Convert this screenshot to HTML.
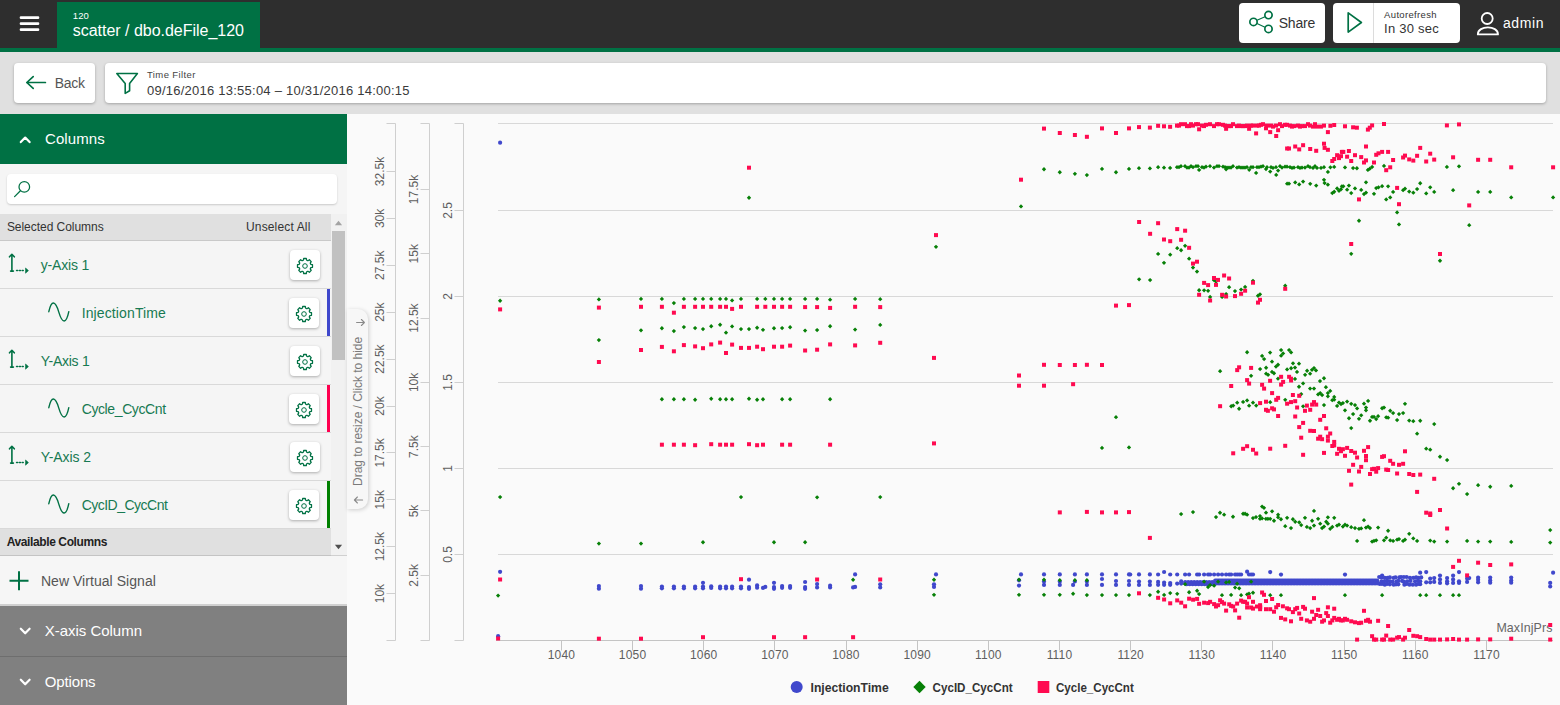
<!DOCTYPE html>
<html lang="en"><head><meta charset="utf-8"><title>scatter / dbo.deFile_120</title>
<style>
*{box-sizing:border-box;margin:0;padding:0}
html,body{width:1560px;height:705px;overflow:hidden;background:#fafafa;font-family:"Liberation Sans",sans-serif;}
.t{position:absolute;line-height:1;white-space:nowrap;}
.abs{position:absolute}
#top{position:absolute;left:0;top:0;width:1560px;height:48px;background:#2e2e2e}
#gline{position:absolute;left:0;top:48px;width:1560px;height:4px;background:#007144}
#tab{position:absolute;left:57px;top:2px;width:203px;height:47px;background:#007144}
#sub{position:absolute;left:0;top:52px;width:1560px;height:62px;background:#e0e0e0}
.btn{position:absolute;background:#fff;border-radius:4px;box-shadow:0 1px 3px rgba(0,0,0,.28)}
#side{position:absolute;left:0;top:114px;width:347px;height:591px;background:#f5f5f5}
.row{position:absolute;left:0;width:331px;height:48px;border-bottom:1px solid #d9d9d9;background:#f5f5f5}
.gear{position:absolute;left:290px;width:30px;height:30px;background:#fff;border-radius:4px;box-shadow:0 1px 3px rgba(0,0,0,.3)}
.bar{position:absolute;left:327px;width:3px;height:47px}
svg{position:absolute;overflow:visible}
</style></head><body>

<div id="top"></div><div id="tab"></div><div id="gline"></div>
<svg style="left:0;top:0" width="60" height="48" viewBox="0 0 60 48"><g fill="#fff"><rect x="19.7" y="16.2" width="19.6" height="2.8" rx="1.2"/><rect x="19.7" y="22.2" width="19.6" height="2.8" rx="1.2"/><rect x="19.7" y="28.2" width="19.6" height="2.8" rx="1.2"/></g></svg>
<div class="t" style="top:11px;font-size:9.5px;color:#fff;letter-spacing:0.183px;left:72.70px;">120</div>
<div class="t" style="top:23px;font-size:16px;color:#fff;letter-spacing:-0.015px;left:72.70px;">scatter / dbo.deFile_120</div>
<div class="btn" style="left:1239px;top:3px;width:86px;height:40px;box-shadow:none"></div>
<svg style="left:1239px;top:3px" width="86" height="40" viewBox="1239 3 86 40"><g fill="none" stroke="#007144" stroke-width="1.7"><circle cx="1268.5" cy="15.1" r="3.65"/><circle cx="1253.5" cy="21.9" r="3.65"/><circle cx="1268.5" cy="28.9" r="3.65"/><path d="M1257 20.3 L1265 16.7 M1257 23.5 L1265 27.3" stroke-width="1.1"/></g></svg>
<div class="t" style="top:16px;font-size:14px;color:#333;letter-spacing:-0.212px;left:1278.70px;">Share</div>
<div class="btn" style="left:1333px;top:3px;width:127px;height:40px;box-shadow:none"></div>
<div class="abs" style="left:1373px;top:3px;width:1px;height:40px;background:#dcdcdc"></div>
<svg style="left:1333px;top:3px" width="40" height="40" viewBox="1333 3 40 40"><path d="M1348.2 12.9 L1361.4 22.5 L1348.2 32.1 Z" fill="none" stroke="#007144" stroke-width="1.7" stroke-linejoin="round"/></svg>
<div class="t" style="top:10px;font-size:9.5px;color:#333;letter-spacing:0.336px;left:1384.10px;">Autorefresh</div>
<div class="t" style="top:22px;font-size:13px;color:#333;letter-spacing:0.250px;left:1384.10px;">In 30 sec</div>
<svg style="left:1470px;top:5px" width="36" height="36" viewBox="1470 5 36 36"><g fill="none" stroke="#fff" stroke-width="1.8"><circle cx="1487.2" cy="18.5" r="5.5"/><path d="M1477.8 34.4 C1477.8 25 1498 25 1498 34.4 Z" stroke-linejoin="round"/></g></svg>
<div class="t" style="top:16px;font-size:14px;color:#fff;letter-spacing:0.574px;left:1503.00px;">admin</div>
<div id="sub"></div>
<div class="btn" style="left:14px;top:63px;width:81px;height:40px"></div>
<svg style="left:14px;top:63px" width="81" height="40" viewBox="14 63 81 40"><path d="M26.8 82.5 H45.4 M33.2 76.6 L26.8 82.5 L33.2 88.4" fill="none" stroke="#007144" stroke-width="1.7" stroke-linecap="round" stroke-linejoin="round"/></svg>
<div class="t" style="top:76px;font-size:14px;color:#555;letter-spacing:-0.256px;left:54.70px;">Back</div>
<div class="btn" style="left:105px;top:63px;width:1441px;height:40px"></div>
<svg style="left:105px;top:63px" width="50" height="40" viewBox="105 63 50 40"><path d="M116.8 73.5 H137.4 L129.6 83.4 V90.8 L125.2 93.4 V83.4 Z" fill="none" stroke="#007144" stroke-width="1.6" stroke-linejoin="round"/></svg>
<div class="t" style="top:70px;font-size:9.5px;color:#444;letter-spacing:0.390px;left:147.00px;">Time Filter</div>
<div class="t" style="top:84px;font-size:13px;color:#3a3a3a;letter-spacing:0.239px;left:147.00px;">09/16/2016 13:55:04 – 10/31/2016 14:00:15</div>
<div id="side"></div>
<div class="abs" style="left:0;top:114px;width:347px;height:50px;background:#007144"></div>
<svg style="left:0;top:114px" width="60" height="50" viewBox="0 114 60 50"><path d="M20.8 142.1 L25.2 137.6 L29.6 142.1" fill="none" stroke="#fff" stroke-width="2.2" stroke-linecap="round" stroke-linejoin="round"/></svg>
<div class="t" style="top:131px;font-size:15px;color:#fff;letter-spacing:0.087px;left:45.00px;">Columns</div>
<div class="btn" style="left:7px;top:174px;width:330px;height:30px;box-shadow:0 1px 2px rgba(0,0,0,.18)"></div>
<svg style="left:7px;top:174px" width="40" height="30" viewBox="7 174 40 30"><g fill="none" stroke="#007144" stroke-width="1.25" stroke-linecap="round"><circle cx="24.3" cy="186.9" r="5.3"/><path d="M20.4 190.7 L14.6 196.6"/></g></svg>
<div class="abs" style="left:0;top:214px;width:331px;height:27px;background:#e0e0e0;border-bottom:1px solid #c9c9c9"></div>
<div class="t" style="top:221px;font-size:12px;color:#333;letter-spacing:-0.037px;left:6.90px;">Selected Columns</div>
<div class="t" style="top:221px;font-size:12px;color:#333;letter-spacing:0.150px;left:246.00px;">Unselect All</div>
<div class="abs" style="left:331px;top:214px;width:16px;height:342px;background:#f1f1f1"></div>
<div class="abs" style="left:332px;top:231px;width:13px;height:129px;background:#c1c1c1"></div>
<svg style="left:331px;top:214px" width="16" height="342" viewBox="331 214 16 342"><path d="M334.9 225.2 L338.5 220.8 L342.1 225.2 Z" fill="#a3a3a3"/><path d="M334.9 544.8 L338.5 549.2 L342.1 544.8 Z" fill="#505050"/></svg>
<div class="row" style="top:241px"></div>
<div class="gear" style="top:250px;left:290px"></div>
<div class="t" style="top:258px;font-size:14px;color:#177a52;letter-spacing:-0.161px;left:40.70px;">y-Axis 1</div>
<div class="row" style="top:289px"></div>
<div class="gear" style="top:298px;left:289px"></div>
<div class="t" style="top:306px;font-size:14px;color:#177a52;letter-spacing:0.120px;left:81.70px;">InjectionTime</div>
<div class="bar" style="top:289px;background:#3f48cc"></div>
<div class="row" style="top:337px"></div>
<div class="gear" style="top:346px;left:290px"></div>
<div class="t" style="top:354px;font-size:14px;color:#177a52;letter-spacing:-0.255px;left:40.70px;">Y-Axis 1</div>
<div class="row" style="top:385px"></div>
<div class="gear" style="top:394px;left:289px"></div>
<div class="t" style="top:402px;font-size:14px;color:#177a52;letter-spacing:-0.391px;left:81.70px;">Cycle_CycCnt</div>
<div class="bar" style="top:385px;background:#ff0050"></div>
<div class="row" style="top:433px"></div>
<div class="gear" style="top:442px;left:290px"></div>
<div class="t" style="top:450px;font-size:14px;color:#177a52;letter-spacing:-0.067px;left:40.70px;">Y-Axis 2</div>
<div class="row" style="top:481px"></div>
<div class="gear" style="top:490px;left:289px"></div>
<div class="t" style="top:498px;font-size:14px;color:#177a52;letter-spacing:-0.516px;left:81.70px;">CycID_CycCnt</div>
<div class="bar" style="top:481px;background:#008000"></div>
<svg style="left:0;top:0" width="347" height="705" viewBox="0 0 347 705"><path d="M310.77 264.34 L312.49 264.71 L312.49 267.29 L310.77 267.66 L310.25 268.90 L311.21 270.39 L309.39 272.21 L307.90 271.25 L306.66 271.77 L306.29 273.49 L303.71 273.49 L303.34 271.77 L302.10 271.25 L300.61 272.21 L298.79 270.39 L299.75 268.90 L299.23 267.66 L297.51 267.29 L297.51 264.71 L299.23 264.34 L299.75 263.10 L298.79 261.61 L300.61 259.79 L302.10 260.75 L303.34 260.23 L303.71 258.51 L306.29 258.51 L306.66 260.23 L307.90 260.75 L309.39 259.79 L311.21 261.61 L310.25 263.10 Z" fill="none" stroke="#007144" stroke-width="1.3" stroke-linejoin="round"/><circle cx="305" cy="266" r="2.3" fill="none" stroke="#007144" stroke-width="1"/><g fill="none" stroke="#007144" stroke-width="1.6" stroke-linecap="round" stroke-linejoin="round"><path d="M11.9 271.1 V254.7 M9.5 256.8 L11.9 254.3 L14.3 256.8"/><path d="M10.6 271.1 H13.4"/><path d="M16.6 270.5 H17.6 M19.4 270.5 H20.4 M22.2 270.5 H23.2" /><path d="M25.8 268.3 L28.4 270.6 L25.8 272.9 Z" fill="#007144" stroke-width="0.7"/></g><path d="M309.77 312.34 L311.49 312.71 L311.49 315.29 L309.77 315.66 L309.25 316.90 L310.21 318.39 L308.39 320.21 L306.90 319.25 L305.66 319.77 L305.29 321.49 L302.71 321.49 L302.34 319.77 L301.10 319.25 L299.61 320.21 L297.79 318.39 L298.75 316.90 L298.23 315.66 L296.51 315.29 L296.51 312.71 L298.23 312.34 L298.75 311.10 L297.79 309.61 L299.61 307.79 L301.10 308.75 L302.34 308.23 L302.71 306.51 L305.29 306.51 L305.66 308.23 L306.90 308.75 L308.39 307.79 L310.21 309.61 L309.25 311.10 Z" fill="none" stroke="#007144" stroke-width="1.3" stroke-linejoin="round"/><circle cx="304" cy="314" r="2.3" fill="none" stroke="#007144" stroke-width="1"/><path d="M48.8 311.7 C51.4 300.1 55.2 300.1 58.8 312.1 C62.4 324.1 66.2 324.1 68.8 311.7" fill="none" stroke="#007144" stroke-width="1.4" stroke-linecap="round"/><path d="M310.77 360.34 L312.49 360.71 L312.49 363.29 L310.77 363.66 L310.25 364.90 L311.21 366.39 L309.39 368.21 L307.90 367.25 L306.66 367.77 L306.29 369.49 L303.71 369.49 L303.34 367.77 L302.10 367.25 L300.61 368.21 L298.79 366.39 L299.75 364.90 L299.23 363.66 L297.51 363.29 L297.51 360.71 L299.23 360.34 L299.75 359.10 L298.79 357.61 L300.61 355.79 L302.10 356.75 L303.34 356.23 L303.71 354.51 L306.29 354.51 L306.66 356.23 L307.90 356.75 L309.39 355.79 L311.21 357.61 L310.25 359.10 Z" fill="none" stroke="#007144" stroke-width="1.3" stroke-linejoin="round"/><circle cx="305" cy="362" r="2.3" fill="none" stroke="#007144" stroke-width="1"/><g fill="none" stroke="#007144" stroke-width="1.6" stroke-linecap="round" stroke-linejoin="round"><path d="M11.9 367.1 V350.7 M9.5 352.8 L11.9 350.3 L14.3 352.8"/><path d="M10.6 367.1 H13.4"/><path d="M16.6 366.5 H17.6 M19.4 366.5 H20.4 M22.2 366.5 H23.2" /><path d="M25.8 364.3 L28.4 366.6 L25.8 368.9 Z" fill="#007144" stroke-width="0.7"/></g><path d="M309.77 408.34 L311.49 408.71 L311.49 411.29 L309.77 411.66 L309.25 412.90 L310.21 414.39 L308.39 416.21 L306.90 415.25 L305.66 415.77 L305.29 417.49 L302.71 417.49 L302.34 415.77 L301.10 415.25 L299.61 416.21 L297.79 414.39 L298.75 412.90 L298.23 411.66 L296.51 411.29 L296.51 408.71 L298.23 408.34 L298.75 407.10 L297.79 405.61 L299.61 403.79 L301.10 404.75 L302.34 404.23 L302.71 402.51 L305.29 402.51 L305.66 404.23 L306.90 404.75 L308.39 403.79 L310.21 405.61 L309.25 407.10 Z" fill="none" stroke="#007144" stroke-width="1.3" stroke-linejoin="round"/><circle cx="304" cy="410" r="2.3" fill="none" stroke="#007144" stroke-width="1"/><path d="M48.8 407.7 C51.4 396.1 55.2 396.1 58.8 408.1 C62.4 420.1 66.2 420.1 68.8 407.7" fill="none" stroke="#007144" stroke-width="1.4" stroke-linecap="round"/><path d="M310.77 456.34 L312.49 456.71 L312.49 459.29 L310.77 459.66 L310.25 460.90 L311.21 462.39 L309.39 464.21 L307.90 463.25 L306.66 463.77 L306.29 465.49 L303.71 465.49 L303.34 463.77 L302.10 463.25 L300.61 464.21 L298.79 462.39 L299.75 460.90 L299.23 459.66 L297.51 459.29 L297.51 456.71 L299.23 456.34 L299.75 455.10 L298.79 453.61 L300.61 451.79 L302.10 452.75 L303.34 452.23 L303.71 450.51 L306.29 450.51 L306.66 452.23 L307.90 452.75 L309.39 451.79 L311.21 453.61 L310.25 455.10 Z" fill="none" stroke="#007144" stroke-width="1.3" stroke-linejoin="round"/><circle cx="305" cy="458" r="2.3" fill="none" stroke="#007144" stroke-width="1"/><g fill="none" stroke="#007144" stroke-width="1.6" stroke-linecap="round" stroke-linejoin="round"><path d="M11.9 463.1 V446.7 M9.5 448.8 L11.9 446.3 L14.3 448.8"/><path d="M10.6 463.1 H13.4"/><path d="M16.6 462.5 H17.6 M19.4 462.5 H20.4 M22.2 462.5 H23.2" /><path d="M25.8 460.3 L28.4 462.6 L25.8 464.9 Z" fill="#007144" stroke-width="0.7"/></g><path d="M309.77 504.34 L311.49 504.71 L311.49 507.29 L309.77 507.66 L309.25 508.90 L310.21 510.39 L308.39 512.21 L306.90 511.25 L305.66 511.77 L305.29 513.49 L302.71 513.49 L302.34 511.77 L301.10 511.25 L299.61 512.21 L297.79 510.39 L298.75 508.90 L298.23 507.66 L296.51 507.29 L296.51 504.71 L298.23 504.34 L298.75 503.10 L297.79 501.61 L299.61 499.79 L301.10 500.75 L302.34 500.23 L302.71 498.51 L305.29 498.51 L305.66 500.23 L306.90 500.75 L308.39 499.79 L310.21 501.61 L309.25 503.10 Z" fill="none" stroke="#007144" stroke-width="1.3" stroke-linejoin="round"/><circle cx="304" cy="506" r="2.3" fill="none" stroke="#007144" stroke-width="1"/><path d="M48.8 503.7 C51.4 492.1 55.2 492.1 58.8 504.1 C62.4 516.1 66.2 516.1 68.8 503.7" fill="none" stroke="#007144" stroke-width="1.4" stroke-linecap="round"/></svg>
<div class="abs" style="left:0;top:529px;width:331px;height:27px;background:#e0e0e0;border-bottom:1px solid #c4c4c4"></div>
<div class="t" style="top:536px;font-size:12px;color:#222;letter-spacing:-0.390px;left:6.70px;font-weight:bold;">Available Columns</div>
<div class="abs" style="left:0;top:556px;width:347px;height:49px;background:#f6f6f6"></div>
<div class="abs" style="left:331px;top:555px;width:16px;height:1px;background:#d0d0d0"></div>
<svg style="left:0;top:556px" width="40" height="49" viewBox="0 556 40 49"><path d="M19 571.3 V590.3 M9.5 580.8 H28.5" stroke="#007144" stroke-width="2" fill="none"/></svg>
<div class="t" style="top:574px;font-size:14px;color:#555;letter-spacing:0.048px;left:40.90px;">New Virtual Signal</div>
<div class="abs" style="left:0;top:604px;width:347px;height:2px;background:#d0d0d0"></div>
<div class="abs" style="left:0;top:606px;width:347px;height:99px;background:#808080"></div>
<div class="abs" style="left:0;top:656px;width:347px;height:1px;background:#6e6e6e"></div>
<svg style="left:0;top:606px" width="60" height="99" viewBox="0 606 60 99"><g fill="none" stroke="#fff" stroke-width="2.2" stroke-linecap="round" stroke-linejoin="round"><path d="M20.8 628.7 L25.2 633.3 L29.6 628.7"/><path d="M20.8 679.7 L25.2 684.3 L29.6 679.7"/></g></svg>
<div class="t" style="top:623px;font-size:15px;color:#fff;letter-spacing:-0.018px;left:44.70px;">X-axis Column</div>
<div class="t" style="top:674px;font-size:15px;color:#fff;letter-spacing:-0.128px;left:44.70px;">Options</div>
<div class="abs" style="left:347px;top:309px;width:21px;height:200px;background:#f7f7f7;border-radius:0 10px 10px 0;box-shadow:1px 1px 4px rgba(0,0,0,.18)"></div>
<svg style="left:0;top:0;font-family:'Liberation Sans',sans-serif" width="1560" height="705" viewBox="0 0 1560 705"><path d="M498 123.5 H1553" stroke="#d8d8d8" stroke-width="1"/><path d="M498 210.5 H1553" stroke="#d8d8d8" stroke-width="1"/><path d="M498 296.5 H1553" stroke="#d8d8d8" stroke-width="1"/><path d="M498 382.5 H1553" stroke="#d8d8d8" stroke-width="1"/><path d="M498 468.5 H1553" stroke="#d8d8d8" stroke-width="1"/><path d="M498 554.5 H1553" stroke="#d8d8d8" stroke-width="1"/><path d="M496 640.5 H1553" stroke="#c4c4c4" stroke-width="1"/><path d="M386.5 123.5 H395.5 V640.5 H386.5" fill="none" stroke="#cfcfcf" stroke-width="1"/><path d="M420.5 123.5 H429.5 V640.5 H420.5" fill="none" stroke="#cfcfcf" stroke-width="1"/><path d="M454.5 123.5 H463.5 V640.5 H454.5" fill="none" stroke="#cfcfcf" stroke-width="1"/><path d="M386.5 171.5 H395.5" stroke="#cfcfcf" stroke-width="1"/><text transform="translate(383.8 171.5) rotate(-90)" text-anchor="middle" font-size="12" fill="#5e5e5e">32.5k</text><path d="M386.5 218.5 H395.5" stroke="#cfcfcf" stroke-width="1"/><text transform="translate(383.8 218.4) rotate(-90)" text-anchor="middle" font-size="12" fill="#5e5e5e">30k</text><path d="M386.5 265.5 H395.5" stroke="#cfcfcf" stroke-width="1"/><text transform="translate(383.8 265.3) rotate(-90)" text-anchor="middle" font-size="12" fill="#5e5e5e">27.5k</text><path d="M386.5 312.5 H395.5" stroke="#cfcfcf" stroke-width="1"/><text transform="translate(383.8 312.2) rotate(-90)" text-anchor="middle" font-size="12" fill="#5e5e5e">25k</text><path d="M386.5 359.5 H395.5" stroke="#cfcfcf" stroke-width="1"/><text transform="translate(383.8 359.1) rotate(-90)" text-anchor="middle" font-size="12" fill="#5e5e5e">22.5k</text><path d="M386.5 406.5 H395.5" stroke="#cfcfcf" stroke-width="1"/><text transform="translate(383.8 406.0) rotate(-90)" text-anchor="middle" font-size="12" fill="#5e5e5e">20k</text><path d="M386.5 452.5 H395.5" stroke="#cfcfcf" stroke-width="1"/><text transform="translate(383.8 452.9) rotate(-90)" text-anchor="middle" font-size="12" fill="#5e5e5e">17.5k</text><path d="M386.5 499.5 H395.5" stroke="#cfcfcf" stroke-width="1"/><text transform="translate(383.8 499.8) rotate(-90)" text-anchor="middle" font-size="12" fill="#5e5e5e">15k</text><path d="M386.5 546.5 H395.5" stroke="#cfcfcf" stroke-width="1"/><text transform="translate(383.8 546.7) rotate(-90)" text-anchor="middle" font-size="12" fill="#5e5e5e">12.5k</text><path d="M386.5 593.5 H395.5" stroke="#cfcfcf" stroke-width="1"/><text transform="translate(383.8 593.5999999999999) rotate(-90)" text-anchor="middle" font-size="12" fill="#5e5e5e">10k</text><path d="M420.5 189.5 H429.5" stroke="#cfcfcf" stroke-width="1"/><text transform="translate(417.6 189.5) rotate(-90)" text-anchor="middle" font-size="12" fill="#5e5e5e">17.5k</text><path d="M420.5 253.5 H429.5" stroke="#cfcfcf" stroke-width="1"/><text transform="translate(417.6 253.8) rotate(-90)" text-anchor="middle" font-size="12" fill="#5e5e5e">15k</text><path d="M420.5 318.5 H429.5" stroke="#cfcfcf" stroke-width="1"/><text transform="translate(417.6 318.1) rotate(-90)" text-anchor="middle" font-size="12" fill="#5e5e5e">12.5k</text><path d="M420.5 382.5 H429.5" stroke="#cfcfcf" stroke-width="1"/><text transform="translate(417.6 382.4) rotate(-90)" text-anchor="middle" font-size="12" fill="#5e5e5e">10k</text><path d="M420.5 446.5 H429.5" stroke="#cfcfcf" stroke-width="1"/><text transform="translate(417.6 446.7) rotate(-90)" text-anchor="middle" font-size="12" fill="#5e5e5e">7.5k</text><path d="M420.5 510.5 H429.5" stroke="#cfcfcf" stroke-width="1"/><text transform="translate(417.6 511.0) rotate(-90)" text-anchor="middle" font-size="12" fill="#5e5e5e">5k</text><path d="M420.5 575.5 H429.5" stroke="#cfcfcf" stroke-width="1"/><text transform="translate(417.6 575.3) rotate(-90)" text-anchor="middle" font-size="12" fill="#5e5e5e">2.5k</text><path d="M454.5 210.5 H463.5" stroke="#cfcfcf" stroke-width="1"/><text transform="translate(451.8 210.5) rotate(-90)" text-anchor="middle" font-size="12" fill="#5e5e5e">2.5</text><path d="M454.5 296.5 H463.5" stroke="#cfcfcf" stroke-width="1"/><text transform="translate(451.8 296.5) rotate(-90)" text-anchor="middle" font-size="12" fill="#5e5e5e">2</text><path d="M454.5 382.5 H463.5" stroke="#cfcfcf" stroke-width="1"/><text transform="translate(451.8 382.5) rotate(-90)" text-anchor="middle" font-size="12" fill="#5e5e5e">1.5</text><path d="M454.5 468.5 H463.5" stroke="#cfcfcf" stroke-width="1"/><text transform="translate(451.8 468.5) rotate(-90)" text-anchor="middle" font-size="12" fill="#5e5e5e">1</text><path d="M454.5 554.5 H463.5" stroke="#cfcfcf" stroke-width="1"/><text transform="translate(451.8 554.5) rotate(-90)" text-anchor="middle" font-size="12" fill="#5e5e5e">0.5</text><path d="M561.5 640.5 V650.5" stroke="#c4c4c4" stroke-width="1"/><text x="561.4" y="658.8" text-anchor="middle" font-size="12" letter-spacing="0.2" fill="#5e5e5e">1040</text><path d="M632.5 640.5 V650.5" stroke="#c4c4c4" stroke-width="1"/><text x="632.6" y="658.8" text-anchor="middle" font-size="12" letter-spacing="0.2" fill="#5e5e5e">1050</text><path d="M703.5 640.5 V650.5" stroke="#c4c4c4" stroke-width="1"/><text x="703.7" y="658.8" text-anchor="middle" font-size="12" letter-spacing="0.2" fill="#5e5e5e">1060</text><path d="M774.5 640.5 V650.5" stroke="#c4c4c4" stroke-width="1"/><text x="774.9" y="658.8" text-anchor="middle" font-size="12" letter-spacing="0.2" fill="#5e5e5e">1070</text><path d="M846.5 640.5 V650.5" stroke="#c4c4c4" stroke-width="1"/><text x="846.0" y="658.8" text-anchor="middle" font-size="12" letter-spacing="0.2" fill="#5e5e5e">1080</text><path d="M917.5 640.5 V650.5" stroke="#c4c4c4" stroke-width="1"/><text x="917.2" y="658.8" text-anchor="middle" font-size="12" letter-spacing="0.2" fill="#5e5e5e">1090</text><path d="M988.5 640.5 V650.5" stroke="#c4c4c4" stroke-width="1"/><text x="988.4" y="658.8" text-anchor="middle" font-size="12" letter-spacing="0.2" fill="#5e5e5e">1100</text><path d="M1059.5 640.5 V650.5" stroke="#c4c4c4" stroke-width="1"/><text x="1059.5" y="658.8" text-anchor="middle" font-size="12" letter-spacing="0.2" fill="#5e5e5e">1110</text><path d="M1130.5 640.5 V650.5" stroke="#c4c4c4" stroke-width="1"/><text x="1130.7" y="658.8" text-anchor="middle" font-size="12" letter-spacing="0.2" fill="#5e5e5e">1120</text><path d="M1201.5 640.5 V650.5" stroke="#c4c4c4" stroke-width="1"/><text x="1201.8" y="658.8" text-anchor="middle" font-size="12" letter-spacing="0.2" fill="#5e5e5e">1130</text><path d="M1272.5 640.5 V650.5" stroke="#c4c4c4" stroke-width="1"/><text x="1273.0" y="658.8" text-anchor="middle" font-size="12" letter-spacing="0.2" fill="#5e5e5e">1140</text><path d="M1344.5 640.5 V650.5" stroke="#c4c4c4" stroke-width="1"/><text x="1344.2" y="658.8" text-anchor="middle" font-size="12" letter-spacing="0.2" fill="#5e5e5e">1150</text><path d="M1415.5 640.5 V650.5" stroke="#c4c4c4" stroke-width="1"/><text x="1415.3" y="658.8" text-anchor="middle" font-size="12" letter-spacing="0.2" fill="#5e5e5e">1160</text><path d="M1486.5 640.5 V650.5" stroke="#c4c4c4" stroke-width="1"/><text x="1486.5" y="658.8" text-anchor="middle" font-size="12" letter-spacing="0.2" fill="#5e5e5e">1170</text><text x="1496.4" y="631.8" font-size="12.4" fill="#666" textLength="56" lengthAdjust="spacing">MaxInjPrs</text><g fill="#4048cc"><circle cx="500.1" cy="142.7" r="2.1"/><circle cx="500.1" cy="571.8" r="2.1"/><circle cx="498.1" cy="636.2" r="2.1"/><circle cx="598.9" cy="586.1" r="2.1"/><circle cx="598.9" cy="588.7" r="2.1"/><circle cx="641.0" cy="586.1" r="2.1"/><circle cx="641.0" cy="588.7" r="2.1"/><circle cx="703.0" cy="582.8" r="2.1"/><circle cx="749.0" cy="579.7" r="2.1"/><circle cx="757.1" cy="585.4" r="2.1"/><circle cx="757.1" cy="587.7" r="2.1"/><circle cx="763.0" cy="587.9" r="2.1"/><circle cx="765.3" cy="586.9" r="2.1"/><circle cx="774.0" cy="582.8" r="2.1"/><circle cx="805.1" cy="582.0" r="2.1"/><circle cx="817.1" cy="584.1" r="2.1"/><circle cx="817.1" cy="587.4" r="2.1"/><circle cx="853.1" cy="587.4" r="2.1"/><circle cx="855.1" cy="574.4" r="2.1"/><circle cx="855.1" cy="586.9" r="2.1"/><circle cx="661.9" cy="586.5" r="2.1"/><circle cx="661.9" cy="588.3" r="2.1"/><circle cx="673.9" cy="586.5" r="2.1"/><circle cx="673.9" cy="588.3" r="2.1"/><circle cx="683.9" cy="586.5" r="2.1"/><circle cx="683.9" cy="588.3" r="2.1"/><circle cx="695.1" cy="586.5" r="2.1"/><circle cx="695.1" cy="588.3" r="2.1"/><circle cx="703.0" cy="586.5" r="2.1"/><circle cx="703.0" cy="588.3" r="2.1"/><circle cx="711.2" cy="586.3" r="2.1"/><circle cx="711.2" cy="588.0" r="2.1"/><circle cx="720.1" cy="586.5" r="2.1"/><circle cx="720.1" cy="588.3" r="2.1"/><circle cx="726.0" cy="586.5" r="2.1"/><circle cx="726.0" cy="588.3" r="2.1"/><circle cx="732.1" cy="586.5" r="2.1"/><circle cx="732.1" cy="588.3" r="2.1"/><circle cx="741.0" cy="586.5" r="2.1"/><circle cx="741.0" cy="588.3" r="2.1"/><circle cx="749.0" cy="587.0" r="2.1"/><circle cx="749.0" cy="588.8" r="2.1"/><circle cx="774.0" cy="587.0" r="2.1"/><circle cx="774.0" cy="588.8" r="2.1"/><circle cx="782.1" cy="586.0" r="2.1"/><circle cx="782.1" cy="587.8" r="2.1"/><circle cx="790.1" cy="586.0" r="2.1"/><circle cx="790.1" cy="587.8" r="2.1"/><circle cx="805.1" cy="587.0" r="2.1"/><circle cx="805.1" cy="588.8" r="2.1"/><circle cx="830.1" cy="585.7" r="2.1"/><circle cx="830.1" cy="587.5" r="2.1"/><circle cx="880.2" cy="584.3" r="2.1"/><circle cx="880.2" cy="587.4" r="2.1"/><circle cx="936.0" cy="574.4" r="2.1"/><circle cx="934.0" cy="584.3" r="2.1"/><circle cx="934.0" cy="586.9" r="2.1"/><circle cx="1021.0" cy="574.4" r="2.1"/><circle cx="1019.0" cy="580.3" r="2.1"/><circle cx="1019.0" cy="585.6" r="2.1"/><circle cx="1044.0" cy="574.4" r="2.1"/><circle cx="1044.0" cy="581.5" r="2.1"/><circle cx="1044.0" cy="584.9" r="2.1"/><circle cx="1059.8" cy="574.4" r="2.1"/><circle cx="1059.8" cy="581.5" r="2.1"/><circle cx="1059.8" cy="584.9" r="2.1"/><circle cx="1074.9" cy="574.4" r="2.1"/><circle cx="1074.9" cy="581.5" r="2.1"/><circle cx="1073.1" cy="584.9" r="2.1"/><circle cx="1086.9" cy="574.4" r="2.1"/><circle cx="1086.9" cy="581.5" r="2.1"/><circle cx="1086.9" cy="584.9" r="2.1"/><circle cx="1102.0" cy="574.4" r="2.1"/><circle cx="1102.0" cy="579.0" r="2.1"/><circle cx="1102.0" cy="584.9" r="2.1"/><circle cx="1116.0" cy="574.4" r="2.1"/><circle cx="1116.0" cy="581.0" r="2.1"/><circle cx="1116.0" cy="584.9" r="2.1"/><circle cx="1129.0" cy="574.4" r="2.1"/><circle cx="1129.0" cy="581.0" r="2.1"/><circle cx="1129.0" cy="584.9" r="2.1"/><circle cx="1139.0" cy="574.4" r="2.1"/><circle cx="1139.0" cy="581.5" r="2.1"/><circle cx="1139.0" cy="584.9" r="2.1"/><circle cx="1149.9" cy="574.4" r="2.1"/><circle cx="1149.9" cy="581.5" r="2.1"/><circle cx="1149.9" cy="584.9" r="2.1"/><circle cx="1270.2" cy="572.1" r="2.1"/><circle cx="1281.0" cy="574.6" r="2.1"/><circle cx="1345.0" cy="574.6" r="2.1"/><circle cx="1382.1" cy="575.6" r="2.1"/><circle cx="1420.2" cy="572.7" r="2.1"/><circle cx="1420.2" cy="581.3" r="2.1"/><circle cx="1420.2" cy="584.2" r="2.1"/><circle cx="1426.2" cy="572.1" r="2.1"/><circle cx="1426.2" cy="582.3" r="2.1"/><circle cx="1430.2" cy="578.5" r="2.1"/><circle cx="1430.2" cy="582.3" r="2.1"/><circle cx="1434.2" cy="578.1" r="2.1"/><circle cx="1434.2" cy="581.9" r="2.1"/><circle cx="1440.0" cy="575.6" r="2.1"/><circle cx="1440.0" cy="579.4" r="2.1"/><circle cx="1440.0" cy="582.9" r="2.1"/><circle cx="1447.1" cy="578.1" r="2.1"/><circle cx="1447.1" cy="581.3" r="2.1"/><circle cx="1447.1" cy="583.3" r="2.1"/><circle cx="1453.1" cy="575.6" r="2.1"/><circle cx="1453.1" cy="579.4" r="2.1"/><circle cx="1453.1" cy="582.9" r="2.1"/><circle cx="1459.0" cy="572.1" r="2.1"/><circle cx="1459.0" cy="581.3" r="2.1"/><circle cx="1459.0" cy="582.9" r="2.1"/><circle cx="1467.1" cy="578.5" r="2.1"/><circle cx="1467.1" cy="581.9" r="2.1"/><circle cx="1469.2" cy="578.1" r="2.1"/><circle cx="1478.1" cy="577.5" r="2.1"/><circle cx="1478.1" cy="579.8" r="2.1"/><circle cx="1478.1" cy="582.3" r="2.1"/><circle cx="1490.2" cy="577.5" r="2.1"/><circle cx="1490.2" cy="580.4" r="2.1"/><circle cx="1490.2" cy="582.7" r="2.1"/><circle cx="1511.2" cy="577.5" r="2.1"/><circle cx="1511.2" cy="580.4" r="2.1"/><circle cx="1511.2" cy="582.7" r="2.1"/><circle cx="1550.2" cy="582.9" r="2.1"/><circle cx="1550.2" cy="586.5" r="2.1"/><circle cx="1553.1" cy="572.7" r="2.1"/><circle cx="1130.2" cy="574.5" r="2.1"/><circle cx="1158.1" cy="574.5" r="2.1"/><circle cx="1170.2" cy="574.5" r="2.1"/><circle cx="1177.2" cy="574.5" r="2.1"/><circle cx="1185.1" cy="574.5" r="2.1"/><circle cx="1189.1" cy="574.5" r="2.1"/><circle cx="1197.1" cy="574.5" r="2.1"/><circle cx="1199.1" cy="574.5" r="2.1"/><circle cx="1204.1" cy="574.5" r="2.1"/><circle cx="1208.1" cy="574.5" r="2.1"/><circle cx="1210.1" cy="574.5" r="2.1"/><circle cx="1214.1" cy="574.5" r="2.1"/><circle cx="1218.1" cy="574.5" r="2.1"/><circle cx="1222.0" cy="574.5" r="2.1"/><circle cx="1226.1" cy="574.5" r="2.1"/><circle cx="1229.2" cy="574.5" r="2.1"/><circle cx="1231.1" cy="574.5" r="2.1"/><circle cx="1235.1" cy="574.5" r="2.1"/><circle cx="1237.1" cy="574.5" r="2.1"/><circle cx="1239.2" cy="574.5" r="2.1"/><circle cx="1241.1" cy="574.5" r="2.1"/><circle cx="1249.0" cy="574.5" r="2.1"/><circle cx="1251.1" cy="574.5" r="2.1"/><circle cx="1253.0" cy="574.5" r="2.1"/><circle cx="1164.1" cy="572.0" r="2.1"/><circle cx="1247.1" cy="571.7" r="2.1"/><circle cx="1158.1" cy="581.9" r="2.1"/><circle cx="1158.1" cy="584.8" r="2.1"/><circle cx="1164.1" cy="582.5" r="2.1"/><circle cx="1164.1" cy="584.8" r="2.1"/><circle cx="1170.2" cy="583.1" r="2.1"/><circle cx="1170.2" cy="584.8" r="2.1"/><circle cx="1177.2" cy="583.6" r="2.1"/><circle cx="1181.2" cy="581.4" r="2.1"/><circle cx="1181.2" cy="583.6" r="2.1"/><circle cx="1185.2" cy="583.3" r="2.1"/><circle cx="1186.7" cy="583.3" r="2.1"/><circle cx="1188.2" cy="583.3" r="2.1"/><circle cx="1189.7" cy="583.3" r="2.1"/><circle cx="1191.2" cy="583.3" r="2.1"/><circle cx="1192.7" cy="583.3" r="2.1"/><circle cx="1194.2" cy="583.3" r="2.1"/><circle cx="1195.7" cy="583.3" r="2.1"/><circle cx="1197.2" cy="583.3" r="2.1"/><circle cx="1198.7" cy="583.3" r="2.1"/><circle cx="1200.2" cy="583.3" r="2.1"/><circle cx="1201.7" cy="583.3" r="2.1"/><circle cx="1203.2" cy="583.3" r="2.1"/><circle cx="1204.7" cy="583.3" r="2.1"/><circle cx="1206.2" cy="583.3" r="2.1"/><circle cx="1207.7" cy="583.3" r="2.1"/><circle cx="1209.2" cy="583.3" r="2.1"/><circle cx="1210.7" cy="583.3" r="2.1"/><circle cx="1212.2" cy="583.3" r="2.1"/><circle cx="1213.7" cy="583.3" r="2.1"/><circle cx="1215.2" cy="580.7" r="2.1"/><circle cx="1215.2" cy="583.3" r="2.1"/><circle cx="1216.7" cy="580.7" r="2.1"/><circle cx="1216.7" cy="583.3" r="2.1"/><circle cx="1218.2" cy="580.7" r="2.1"/><circle cx="1218.2" cy="583.3" r="2.1"/><circle cx="1219.7" cy="580.7" r="2.1"/><circle cx="1219.7" cy="583.3" r="2.1"/><circle cx="1221.2" cy="580.7" r="2.1"/><circle cx="1221.2" cy="583.3" r="2.1"/><circle cx="1222.7" cy="580.7" r="2.1"/><circle cx="1222.7" cy="583.3" r="2.1"/><circle cx="1224.2" cy="580.7" r="2.1"/><circle cx="1224.2" cy="583.3" r="2.1"/><circle cx="1225.7" cy="580.7" r="2.1"/><circle cx="1225.7" cy="583.3" r="2.1"/><circle cx="1227.2" cy="580.7" r="2.1"/><circle cx="1227.2" cy="583.3" r="2.1"/><circle cx="1228.7" cy="580.7" r="2.1"/><circle cx="1228.7" cy="583.3" r="2.1"/><circle cx="1230.2" cy="580.7" r="2.1"/><circle cx="1230.2" cy="583.3" r="2.1"/><circle cx="1231.7" cy="580.7" r="2.1"/><circle cx="1231.7" cy="583.3" r="2.1"/><circle cx="1233.2" cy="580.7" r="2.1"/><circle cx="1233.2" cy="583.3" r="2.1"/><circle cx="1234.7" cy="580.7" r="2.1"/><circle cx="1234.7" cy="583.3" r="2.1"/><circle cx="1236.2" cy="580.7" r="2.1"/><circle cx="1236.2" cy="583.3" r="2.1"/><circle cx="1237.7" cy="580.7" r="2.1"/><circle cx="1237.7" cy="583.3" r="2.1"/><circle cx="1239.2" cy="580.7" r="2.1"/><circle cx="1239.2" cy="583.3" r="2.1"/><circle cx="1240.7" cy="580.7" r="2.1"/><circle cx="1240.7" cy="583.3" r="2.1"/><circle cx="1242.2" cy="580.7" r="2.1"/><circle cx="1242.2" cy="583.3" r="2.1"/><circle cx="1243.7" cy="580.7" r="2.1"/><circle cx="1243.7" cy="583.3" r="2.1"/><circle cx="1245.2" cy="580.7" r="2.1"/><circle cx="1245.2" cy="583.3" r="2.1"/><circle cx="1246.7" cy="580.7" r="2.1"/><circle cx="1246.7" cy="583.3" r="2.1"/><circle cx="1248.2" cy="580.7" r="2.1"/><circle cx="1248.2" cy="583.3" r="2.1"/><circle cx="1249.7" cy="580.7" r="2.1"/><circle cx="1249.7" cy="583.3" r="2.1"/><circle cx="1251.2" cy="580.7" r="2.1"/><circle cx="1251.2" cy="583.3" r="2.1"/><circle cx="1252.7" cy="580.7" r="2.1"/><circle cx="1252.7" cy="583.3" r="2.1"/><circle cx="1254.2" cy="580.7" r="2.1"/><circle cx="1254.2" cy="583.3" r="2.1"/><circle cx="1255.7" cy="580.7" r="2.1"/><circle cx="1255.7" cy="583.3" r="2.1"/><circle cx="1257.2" cy="580.7" r="2.1"/><circle cx="1257.2" cy="583.3" r="2.1"/><circle cx="1258.7" cy="580.7" r="2.1"/><circle cx="1258.7" cy="583.3" r="2.1"/><circle cx="1260.2" cy="580.7" r="2.1"/><circle cx="1260.2" cy="583.3" r="2.1"/><circle cx="1261.7" cy="580.7" r="2.1"/><circle cx="1261.7" cy="583.3" r="2.1"/><circle cx="1263.2" cy="580.7" r="2.1"/><circle cx="1263.2" cy="583.3" r="2.1"/><circle cx="1264.7" cy="580.7" r="2.1"/><circle cx="1264.7" cy="583.3" r="2.1"/><circle cx="1266.2" cy="580.7" r="2.1"/><circle cx="1266.2" cy="583.3" r="2.1"/><circle cx="1267.7" cy="580.7" r="2.1"/><circle cx="1267.7" cy="583.3" r="2.1"/><circle cx="1269.2" cy="580.7" r="2.1"/><circle cx="1269.2" cy="583.3" r="2.1"/><circle cx="1270.7" cy="580.7" r="2.1"/><circle cx="1270.7" cy="583.3" r="2.1"/><circle cx="1272.2" cy="580.7" r="2.1"/><circle cx="1272.2" cy="583.3" r="2.1"/><circle cx="1273.7" cy="580.7" r="2.1"/><circle cx="1273.7" cy="583.3" r="2.1"/><circle cx="1275.2" cy="580.7" r="2.1"/><circle cx="1275.2" cy="583.3" r="2.1"/><circle cx="1276.7" cy="580.7" r="2.1"/><circle cx="1276.7" cy="583.3" r="2.1"/><circle cx="1278.2" cy="580.7" r="2.1"/><circle cx="1278.2" cy="583.3" r="2.1"/><circle cx="1279.7" cy="580.7" r="2.1"/><circle cx="1279.7" cy="583.3" r="2.1"/><circle cx="1281.2" cy="580.7" r="2.1"/><circle cx="1281.2" cy="583.3" r="2.1"/><circle cx="1282.7" cy="580.7" r="2.1"/><circle cx="1282.7" cy="583.3" r="2.1"/><circle cx="1284.2" cy="580.7" r="2.1"/><circle cx="1284.2" cy="583.3" r="2.1"/><circle cx="1285.7" cy="580.7" r="2.1"/><circle cx="1285.7" cy="583.3" r="2.1"/><circle cx="1287.2" cy="580.7" r="2.1"/><circle cx="1287.2" cy="583.3" r="2.1"/><circle cx="1288.7" cy="580.7" r="2.1"/><circle cx="1288.7" cy="583.3" r="2.1"/><circle cx="1290.2" cy="580.7" r="2.1"/><circle cx="1290.2" cy="583.3" r="2.1"/><circle cx="1291.7" cy="580.7" r="2.1"/><circle cx="1291.7" cy="583.3" r="2.1"/><circle cx="1293.2" cy="580.7" r="2.1"/><circle cx="1293.2" cy="583.3" r="2.1"/><circle cx="1294.7" cy="580.7" r="2.1"/><circle cx="1294.7" cy="583.3" r="2.1"/><circle cx="1296.2" cy="580.7" r="2.1"/><circle cx="1296.2" cy="583.3" r="2.1"/><circle cx="1297.7" cy="580.7" r="2.1"/><circle cx="1297.7" cy="583.3" r="2.1"/><circle cx="1299.2" cy="580.7" r="2.1"/><circle cx="1299.2" cy="583.3" r="2.1"/><circle cx="1300.7" cy="580.7" r="2.1"/><circle cx="1300.7" cy="583.3" r="2.1"/><circle cx="1302.2" cy="580.7" r="2.1"/><circle cx="1302.2" cy="583.3" r="2.1"/><circle cx="1303.7" cy="580.7" r="2.1"/><circle cx="1303.7" cy="583.3" r="2.1"/><circle cx="1305.2" cy="580.7" r="2.1"/><circle cx="1305.2" cy="583.3" r="2.1"/><circle cx="1306.7" cy="580.7" r="2.1"/><circle cx="1306.7" cy="583.3" r="2.1"/><circle cx="1308.2" cy="580.7" r="2.1"/><circle cx="1308.2" cy="583.3" r="2.1"/><circle cx="1309.7" cy="580.7" r="2.1"/><circle cx="1309.7" cy="583.3" r="2.1"/><circle cx="1311.2" cy="580.7" r="2.1"/><circle cx="1311.2" cy="583.3" r="2.1"/><circle cx="1312.7" cy="580.7" r="2.1"/><circle cx="1312.7" cy="583.3" r="2.1"/><circle cx="1314.2" cy="580.7" r="2.1"/><circle cx="1314.2" cy="583.3" r="2.1"/><circle cx="1315.7" cy="580.7" r="2.1"/><circle cx="1315.7" cy="583.3" r="2.1"/><circle cx="1317.2" cy="580.7" r="2.1"/><circle cx="1317.2" cy="583.3" r="2.1"/><circle cx="1318.7" cy="580.7" r="2.1"/><circle cx="1318.7" cy="583.3" r="2.1"/><circle cx="1320.2" cy="580.7" r="2.1"/><circle cx="1320.2" cy="583.3" r="2.1"/><circle cx="1321.7" cy="580.7" r="2.1"/><circle cx="1321.7" cy="583.3" r="2.1"/><circle cx="1323.2" cy="580.7" r="2.1"/><circle cx="1323.2" cy="583.3" r="2.1"/><circle cx="1324.7" cy="580.7" r="2.1"/><circle cx="1324.7" cy="583.3" r="2.1"/><circle cx="1326.2" cy="580.7" r="2.1"/><circle cx="1326.2" cy="583.3" r="2.1"/><circle cx="1327.7" cy="580.7" r="2.1"/><circle cx="1327.7" cy="583.3" r="2.1"/><circle cx="1329.2" cy="580.7" r="2.1"/><circle cx="1329.2" cy="583.3" r="2.1"/><circle cx="1330.7" cy="580.7" r="2.1"/><circle cx="1330.7" cy="583.3" r="2.1"/><circle cx="1332.2" cy="580.7" r="2.1"/><circle cx="1332.2" cy="583.3" r="2.1"/><circle cx="1333.7" cy="580.7" r="2.1"/><circle cx="1333.7" cy="583.3" r="2.1"/><circle cx="1335.2" cy="580.7" r="2.1"/><circle cx="1335.2" cy="583.3" r="2.1"/><circle cx="1336.7" cy="580.7" r="2.1"/><circle cx="1336.7" cy="583.3" r="2.1"/><circle cx="1338.2" cy="580.7" r="2.1"/><circle cx="1338.2" cy="583.3" r="2.1"/><circle cx="1339.7" cy="580.7" r="2.1"/><circle cx="1339.7" cy="583.3" r="2.1"/><circle cx="1341.2" cy="580.7" r="2.1"/><circle cx="1341.2" cy="583.3" r="2.1"/><circle cx="1342.7" cy="580.7" r="2.1"/><circle cx="1342.7" cy="583.3" r="2.1"/><circle cx="1344.2" cy="580.7" r="2.1"/><circle cx="1344.2" cy="583.3" r="2.1"/><circle cx="1345.7" cy="580.7" r="2.1"/><circle cx="1345.7" cy="583.3" r="2.1"/><circle cx="1347.2" cy="580.7" r="2.1"/><circle cx="1347.2" cy="583.3" r="2.1"/><circle cx="1348.7" cy="580.7" r="2.1"/><circle cx="1348.7" cy="583.3" r="2.1"/><circle cx="1350.2" cy="580.7" r="2.1"/><circle cx="1350.2" cy="583.3" r="2.1"/><circle cx="1351.7" cy="580.7" r="2.1"/><circle cx="1351.7" cy="583.3" r="2.1"/><circle cx="1353.2" cy="580.7" r="2.1"/><circle cx="1353.2" cy="583.3" r="2.1"/><circle cx="1354.7" cy="580.7" r="2.1"/><circle cx="1354.7" cy="583.3" r="2.1"/><circle cx="1356.2" cy="580.7" r="2.1"/><circle cx="1356.2" cy="583.3" r="2.1"/><circle cx="1357.7" cy="580.7" r="2.1"/><circle cx="1357.7" cy="583.3" r="2.1"/><circle cx="1359.2" cy="580.7" r="2.1"/><circle cx="1359.2" cy="583.3" r="2.1"/><circle cx="1360.7" cy="580.7" r="2.1"/><circle cx="1360.7" cy="583.3" r="2.1"/><circle cx="1362.2" cy="580.7" r="2.1"/><circle cx="1362.2" cy="583.3" r="2.1"/><circle cx="1363.7" cy="580.7" r="2.1"/><circle cx="1363.7" cy="583.3" r="2.1"/><circle cx="1365.2" cy="580.7" r="2.1"/><circle cx="1365.2" cy="583.3" r="2.1"/><circle cx="1366.7" cy="580.7" r="2.1"/><circle cx="1366.7" cy="583.3" r="2.1"/><circle cx="1368.2" cy="580.7" r="2.1"/><circle cx="1368.2" cy="583.3" r="2.1"/><circle cx="1369.7" cy="580.7" r="2.1"/><circle cx="1369.7" cy="583.3" r="2.1"/><circle cx="1371.2" cy="580.7" r="2.1"/><circle cx="1371.2" cy="583.3" r="2.1"/><circle cx="1372.7" cy="580.7" r="2.1"/><circle cx="1372.7" cy="583.3" r="2.1"/><circle cx="1374.2" cy="580.7" r="2.1"/><circle cx="1374.2" cy="583.3" r="2.1"/><circle cx="1375.7" cy="580.7" r="2.1"/><circle cx="1375.7" cy="583.3" r="2.1"/><circle cx="1377.2" cy="580.7" r="2.1"/><circle cx="1377.2" cy="583.3" r="2.1"/><circle cx="1379.2" cy="577.0" r="2.1"/><circle cx="1379.7" cy="583.9" r="2.1"/><circle cx="1381.5" cy="577.4" r="2.1"/><circle cx="1381.5" cy="581.3" r="2.1"/><circle cx="1382.0" cy="583.9" r="2.1"/><circle cx="1384.8" cy="577.8" r="2.1"/><circle cx="1384.3" cy="581.3" r="2.1"/><circle cx="1384.8" cy="584.7" r="2.1"/><circle cx="1387.6" cy="577.8" r="2.1"/><circle cx="1387.1" cy="580.9" r="2.1"/><circle cx="1387.1" cy="583.9" r="2.1"/><circle cx="1389.9" cy="577.4" r="2.1"/><circle cx="1389.9" cy="581.3" r="2.1"/><circle cx="1389.9" cy="584.3" r="2.1"/><circle cx="1393.7" cy="577.8" r="2.1"/><circle cx="1392.7" cy="581.7" r="2.1"/><circle cx="1393.7" cy="584.7" r="2.1"/><circle cx="1395.5" cy="577.4" r="2.1"/><circle cx="1396.5" cy="581.7" r="2.1"/><circle cx="1396.0" cy="584.3" r="2.1"/><circle cx="1399.3" cy="577.4" r="2.1"/><circle cx="1398.3" cy="580.9" r="2.1"/><circle cx="1398.3" cy="584.3" r="2.1"/><circle cx="1401.1" cy="577.0" r="2.1"/><circle cx="1402.1" cy="580.9" r="2.1"/><circle cx="1403.9" cy="577.0" r="2.1"/><circle cx="1403.9" cy="581.7" r="2.1"/><circle cx="1404.4" cy="584.7" r="2.1"/><circle cx="1406.7" cy="577.0" r="2.1"/><circle cx="1407.2" cy="581.3" r="2.1"/><circle cx="1406.7" cy="583.9" r="2.1"/><circle cx="1410.0" cy="577.8" r="2.1"/><circle cx="1410.5" cy="580.9" r="2.1"/><circle cx="1409.5" cy="584.7" r="2.1"/><circle cx="1413.3" cy="577.8" r="2.1"/><circle cx="1412.8" cy="584.7" r="2.1"/><circle cx="1416.1" cy="577.4" r="2.1"/><circle cx="1415.1" cy="581.3" r="2.1"/><circle cx="1416.1" cy="584.7" r="2.1"/><circle cx="1418.4" cy="577.8" r="2.1"/><circle cx="1417.9" cy="580.9" r="2.1"/><circle cx="1418.9" cy="583.9" r="2.1"/><circle cx="1421.2" cy="577.4" r="2.1"/><circle cx="1185.2" cy="582.0" r="2.1"/><circle cx="1186.7" cy="584.2" r="2.1"/><circle cx="1188.2" cy="582.0" r="2.1"/><circle cx="1189.7" cy="584.2" r="2.1"/><circle cx="1191.2" cy="582.0" r="2.1"/><circle cx="1192.7" cy="584.2" r="2.1"/><circle cx="1194.2" cy="582.0" r="2.1"/><circle cx="1195.7" cy="584.2" r="2.1"/><circle cx="1197.2" cy="582.0" r="2.1"/><circle cx="1198.7" cy="584.2" r="2.1"/><circle cx="1200.2" cy="582.0" r="2.1"/><circle cx="1201.7" cy="584.2" r="2.1"/><circle cx="1203.2" cy="582.0" r="2.1"/><circle cx="1204.7" cy="584.2" r="2.1"/><circle cx="1206.2" cy="582.0" r="2.1"/><circle cx="1207.7" cy="584.2" r="2.1"/><circle cx="1209.2" cy="582.0" r="2.1"/><circle cx="1210.7" cy="584.2" r="2.1"/><circle cx="1212.2" cy="582.0" r="2.1"/><circle cx="1213.7" cy="584.2" r="2.1"/></g><g fill="#078007"><path d="M749.0 195.6l2.15 2.15l-2.15 2.15l-2.15 -2.15z"/><path d="M500.1 298.6l2.15 2.15l-2.15 2.15l-2.15 -2.15z"/><path d="M598.9 297.3l2.15 2.15l-2.15 2.15l-2.15 -2.15z"/><path d="M641.0 296.8l2.15 2.15l-2.15 2.15l-2.15 -2.15z"/><path d="M661.9 296.8l2.15 2.15l-2.15 2.15l-2.15 -2.15z"/><path d="M673.9 300.9l2.15 2.15l-2.15 2.15l-2.15 -2.15z"/><path d="M683.9 296.8l2.15 2.15l-2.15 2.15l-2.15 -2.15z"/><path d="M695.1 296.8l2.15 2.15l-2.15 2.15l-2.15 -2.15z"/><path d="M703.0 296.8l2.15 2.15l-2.15 2.15l-2.15 -2.15z"/><path d="M711.2 296.8l2.15 2.15l-2.15 2.15l-2.15 -2.15z"/><path d="M720.1 296.8l2.15 2.15l-2.15 2.15l-2.15 -2.15z"/><path d="M726.0 296.8l2.15 2.15l-2.15 2.15l-2.15 -2.15z"/><path d="M732.1 298.3l2.15 2.15l-2.15 2.15l-2.15 -2.15z"/><path d="M741.0 296.8l2.15 2.15l-2.15 2.15l-2.15 -2.15z"/><path d="M757.1 296.8l2.15 2.15l-2.15 2.15l-2.15 -2.15z"/><path d="M765.3 296.8l2.15 2.15l-2.15 2.15l-2.15 -2.15z"/><path d="M774.0 296.8l2.15 2.15l-2.15 2.15l-2.15 -2.15z"/><path d="M782.1 296.8l2.15 2.15l-2.15 2.15l-2.15 -2.15z"/><path d="M790.1 296.8l2.15 2.15l-2.15 2.15l-2.15 -2.15z"/><path d="M805.1 296.8l2.15 2.15l-2.15 2.15l-2.15 -2.15z"/><path d="M817.1 296.8l2.15 2.15l-2.15 2.15l-2.15 -2.15z"/><path d="M830.1 297.5l2.15 2.15l-2.15 2.15l-2.15 -2.15z"/><path d="M855.1 296.8l2.15 2.15l-2.15 2.15l-2.15 -2.15z"/><path d="M598.9 337.9l2.15 2.15l-2.15 2.15l-2.15 -2.15z"/><path d="M641.0 328.2l2.15 2.15l-2.15 2.15l-2.15 -2.15z"/><path d="M661.9 326.1l2.15 2.15l-2.15 2.15l-2.15 -2.15z"/><path d="M673.9 328.9l2.15 2.15l-2.15 2.15l-2.15 -2.15z"/><path d="M683.9 324.9l2.15 2.15l-2.15 2.15l-2.15 -2.15z"/><path d="M695.1 325.9l2.15 2.15l-2.15 2.15l-2.15 -2.15z"/><path d="M703.0 326.9l2.15 2.15l-2.15 2.15l-2.15 -2.15z"/><path d="M711.2 324.1l2.15 2.15l-2.15 2.15l-2.15 -2.15z"/><path d="M720.1 322.6l2.15 2.15l-2.15 2.15l-2.15 -2.15z"/><path d="M726.0 330.5l2.15 2.15l-2.15 2.15l-2.15 -2.15z"/><path d="M732.1 324.3l2.15 2.15l-2.15 2.15l-2.15 -2.15z"/><path d="M741.0 326.9l2.15 2.15l-2.15 2.15l-2.15 -2.15z"/><path d="M749.0 326.9l2.15 2.15l-2.15 2.15l-2.15 -2.15z"/><path d="M757.1 325.6l2.15 2.15l-2.15 2.15l-2.15 -2.15z"/><path d="M763.0 327.7l2.15 2.15l-2.15 2.15l-2.15 -2.15z"/><path d="M774.0 326.1l2.15 2.15l-2.15 2.15l-2.15 -2.15z"/><path d="M782.1 325.9l2.15 2.15l-2.15 2.15l-2.15 -2.15z"/><path d="M790.1 325.1l2.15 2.15l-2.15 2.15l-2.15 -2.15z"/><path d="M805.1 328.4l2.15 2.15l-2.15 2.15l-2.15 -2.15z"/><path d="M817.1 327.9l2.15 2.15l-2.15 2.15l-2.15 -2.15z"/><path d="M830.1 324.1l2.15 2.15l-2.15 2.15l-2.15 -2.15z"/><path d="M855.1 327.4l2.15 2.15l-2.15 2.15l-2.15 -2.15z"/><path d="M661.9 397.1l2.15 2.15l-2.15 2.15l-2.15 -2.15z"/><path d="M673.9 397.1l2.15 2.15l-2.15 2.15l-2.15 -2.15z"/><path d="M683.9 397.1l2.15 2.15l-2.15 2.15l-2.15 -2.15z"/><path d="M695.1 397.6l2.15 2.15l-2.15 2.15l-2.15 -2.15z"/><path d="M711.2 396.6l2.15 2.15l-2.15 2.15l-2.15 -2.15z"/><path d="M720.1 397.1l2.15 2.15l-2.15 2.15l-2.15 -2.15z"/><path d="M726.0 397.1l2.15 2.15l-2.15 2.15l-2.15 -2.15z"/><path d="M732.1 397.1l2.15 2.15l-2.15 2.15l-2.15 -2.15z"/><path d="M749.0 396.6l2.15 2.15l-2.15 2.15l-2.15 -2.15z"/><path d="M757.1 397.6l2.15 2.15l-2.15 2.15l-2.15 -2.15z"/><path d="M763.0 397.1l2.15 2.15l-2.15 2.15l-2.15 -2.15z"/><path d="M782.1 397.1l2.15 2.15l-2.15 2.15l-2.15 -2.15z"/><path d="M790.1 397.1l2.15 2.15l-2.15 2.15l-2.15 -2.15z"/><path d="M830.1 397.1l2.15 2.15l-2.15 2.15l-2.15 -2.15z"/><path d="M500.1 494.9l2.15 2.15l-2.15 2.15l-2.15 -2.15z"/><path d="M741.0 494.9l2.15 2.15l-2.15 2.15l-2.15 -2.15z"/><path d="M817.1 495.2l2.15 2.15l-2.15 2.15l-2.15 -2.15z"/><path d="M598.9 541.4l2.15 2.15l-2.15 2.15l-2.15 -2.15z"/><path d="M641.0 541.4l2.15 2.15l-2.15 2.15l-2.15 -2.15z"/><path d="M703.0 540.1l2.15 2.15l-2.15 2.15l-2.15 -2.15z"/><path d="M774.0 540.1l2.15 2.15l-2.15 2.15l-2.15 -2.15z"/><path d="M805.1 540.1l2.15 2.15l-2.15 2.15l-2.15 -2.15z"/><path d="M498.1 593.4l2.15 2.15l-2.15 2.15l-2.15 -2.15z"/><path d="M853.1 577.6l2.15 2.15l-2.15 2.15l-2.15 -2.15z"/><path d="M936.0 244.7l2.15 2.15l-2.15 2.15l-2.15 -2.15z"/><path d="M1021.0 204.3l2.15 2.15l-2.15 2.15l-2.15 -2.15z"/><path d="M1044.0 167.1l2.15 2.15l-2.15 2.15l-2.15 -2.15z"/><path d="M1059.8 170.1l2.15 2.15l-2.15 2.15l-2.15 -2.15z"/><path d="M1074.9 171.7l2.15 2.15l-2.15 2.15l-2.15 -2.15z"/><path d="M1086.9 172.9l2.15 2.15l-2.15 2.15l-2.15 -2.15z"/><path d="M1102.0 166.8l2.15 2.15l-2.15 2.15l-2.15 -2.15z"/><path d="M1116.0 170.1l2.15 2.15l-2.15 2.15l-2.15 -2.15z"/><path d="M1129.0 166.8l2.15 2.15l-2.15 2.15l-2.15 -2.15z"/><path d="M1139.0 166.0l2.15 2.15l-2.15 2.15l-2.15 -2.15z"/><path d="M1149.9 166.3l2.15 2.15l-2.15 2.15l-2.15 -2.15z"/><path d="M1158.1 165.0l2.15 2.15l-2.15 2.15l-2.15 -2.15z"/><path d="M1164.0 165.5l2.15 2.15l-2.15 2.15l-2.15 -2.15z"/><path d="M1170.1 165.8l2.15 2.15l-2.15 2.15l-2.15 -2.15z"/><path d="M880.2 297.0l2.15 2.15l-2.15 2.15l-2.15 -2.15z"/><path d="M880.2 322.8l2.15 2.15l-2.15 2.15l-2.15 -2.15z"/><path d="M1116.0 415.0l2.15 2.15l-2.15 2.15l-2.15 -2.15z"/><path d="M1102.0 445.8l2.15 2.15l-2.15 2.15l-2.15 -2.15z"/><path d="M1129.0 445.3l2.15 2.15l-2.15 2.15l-2.15 -2.15z"/><path d="M880.2 494.9l2.15 2.15l-2.15 2.15l-2.15 -2.15z"/><path d="M934.0 577.6l2.15 2.15l-2.15 2.15l-2.15 -2.15z"/><path d="M934.0 592.7l2.15 2.15l-2.15 2.15l-2.15 -2.15z"/><path d="M1019.0 577.6l2.15 2.15l-2.15 2.15l-2.15 -2.15z"/><path d="M1019.0 592.7l2.15 2.15l-2.15 2.15l-2.15 -2.15z"/><path d="M1044.0 577.6l2.15 2.15l-2.15 2.15l-2.15 -2.15z"/><path d="M1044.0 592.7l2.15 2.15l-2.15 2.15l-2.15 -2.15z"/><path d="M1059.8 578.1l2.15 2.15l-2.15 2.15l-2.15 -2.15z"/><path d="M1059.8 592.7l2.15 2.15l-2.15 2.15l-2.15 -2.15z"/><path d="M1074.9 578.1l2.15 2.15l-2.15 2.15l-2.15 -2.15z"/><path d="M1073.1 591.6l2.15 2.15l-2.15 2.15l-2.15 -2.15z"/><path d="M1086.9 578.1l2.15 2.15l-2.15 2.15l-2.15 -2.15z"/><path d="M1086.9 592.9l2.15 2.15l-2.15 2.15l-2.15 -2.15z"/><path d="M1102.0 592.9l2.15 2.15l-2.15 2.15l-2.15 -2.15z"/><path d="M1116.0 592.9l2.15 2.15l-2.15 2.15l-2.15 -2.15z"/><path d="M1129.0 592.9l2.15 2.15l-2.15 2.15l-2.15 -2.15z"/><path d="M1149.9 592.9l2.15 2.15l-2.15 2.15l-2.15 -2.15z"/><path d="M1139.1 277.2l2.15 2.15l-2.15 2.15l-2.15 -2.15z"/><path d="M1150.1 277.9l2.15 2.15l-2.15 2.15l-2.15 -2.15z"/><path d="M1158.1 251.8l2.15 2.15l-2.15 2.15l-2.15 -2.15z"/><path d="M1164.0 260.7l2.15 2.15l-2.15 2.15l-2.15 -2.15z"/><path d="M1170.2 252.5l2.15 2.15l-2.15 2.15l-2.15 -2.15z"/><path d="M1177.2 246.0l2.15 2.15l-2.15 2.15l-2.15 -2.15z"/><path d="M1181.1 248.1l2.15 2.15l-2.15 2.15l-2.15 -2.15z"/><path d="M1185.1 243.7l2.15 2.15l-2.15 2.15l-2.15 -2.15z"/><path d="M1189.1 256.5l2.15 2.15l-2.15 2.15l-2.15 -2.15z"/><path d="M1193.0 265.4l2.15 2.15l-2.15 2.15l-2.15 -2.15z"/><path d="M1197.0 269.4l2.15 2.15l-2.15 2.15l-2.15 -2.15z"/><path d="M1199.1 288.1l2.15 2.15l-2.15 2.15l-2.15 -2.15z"/><path d="M1204.1 288.2l2.15 2.15l-2.15 2.15l-2.15 -2.15z"/><path d="M1208.1 288.7l2.15 2.15l-2.15 2.15l-2.15 -2.15z"/><path d="M1210.1 294.8l2.15 2.15l-2.15 2.15l-2.15 -2.15z"/><path d="M1214.0 278.0l2.15 2.15l-2.15 2.15l-2.15 -2.15z"/><path d="M1216.0 279.4l2.15 2.15l-2.15 2.15l-2.15 -2.15z"/><path d="M1222.1 294.8l2.15 2.15l-2.15 2.15l-2.15 -2.15z"/><path d="M1226.1 291.9l2.15 2.15l-2.15 2.15l-2.15 -2.15z"/><path d="M1229.1 285.0l2.15 2.15l-2.15 2.15l-2.15 -2.15z"/><path d="M1235.0 288.9l2.15 2.15l-2.15 2.15l-2.15 -2.15z"/><path d="M1241.1 287.4l2.15 2.15l-2.15 2.15l-2.15 -2.15z"/><path d="M1245.1 284.8l2.15 2.15l-2.15 2.15l-2.15 -2.15z"/><path d="M1253.0 278.7l2.15 2.15l-2.15 2.15l-2.15 -2.15z"/><path d="M1260.0 292.2l2.15 2.15l-2.15 2.15l-2.15 -2.15z"/><path d="M1258.0 293.6l2.15 2.15l-2.15 2.15l-2.15 -2.15z"/><path d="M1220.1 369.0l2.15 2.15l-2.15 2.15l-2.15 -2.15z"/><path d="M1247.1 350.1l2.15 2.15l-2.15 2.15l-2.15 -2.15z"/><path d="M1251.1 373.7l2.15 2.15l-2.15 2.15l-2.15 -2.15z"/><path d="M1260.1 366.9l2.15 2.15l-2.15 2.15l-2.15 -2.15z"/><path d="M1262.1 353.8l2.15 2.15l-2.15 2.15l-2.15 -2.15z"/><path d="M1264.1 356.9l2.15 2.15l-2.15 2.15l-2.15 -2.15z"/><path d="M1266.1 365.6l2.15 2.15l-2.15 2.15l-2.15 -2.15z"/><path d="M1266.1 371.5l2.15 2.15l-2.15 2.15l-2.15 -2.15z"/><path d="M1268.1 372.7l2.15 2.15l-2.15 2.15l-2.15 -2.15z"/><path d="M1270.1 350.4l2.15 2.15l-2.15 2.15l-2.15 -2.15z"/><path d="M1272.0 359.5l2.15 2.15l-2.15 2.15l-2.15 -2.15z"/><path d="M1272.0 369.8l2.15 2.15l-2.15 2.15l-2.15 -2.15z"/><path d="M1274.0 371.1l2.15 2.15l-2.15 2.15l-2.15 -2.15z"/><path d="M1276.0 364.4l2.15 2.15l-2.15 2.15l-2.15 -2.15z"/><path d="M1278.0 362.6l2.15 2.15l-2.15 2.15l-2.15 -2.15z"/><path d="M1278.0 376.5l2.15 2.15l-2.15 2.15l-2.15 -2.15z"/><path d="M1281.1 347.9l2.15 2.15l-2.15 2.15l-2.15 -2.15z"/><path d="M1281.1 353.5l2.15 2.15l-2.15 2.15l-2.15 -2.15z"/><path d="M1283.1 351.3l2.15 2.15l-2.15 2.15l-2.15 -2.15z"/><path d="M1289.1 347.9l2.15 2.15l-2.15 2.15l-2.15 -2.15z"/><path d="M1291.1 350.3l2.15 2.15l-2.15 2.15l-2.15 -2.15z"/><path d="M1287.1 367.3l2.15 2.15l-2.15 2.15l-2.15 -2.15z"/><path d="M1291.1 366.1l2.15 2.15l-2.15 2.15l-2.15 -2.15z"/><path d="M1293.0 361.2l2.15 2.15l-2.15 2.15l-2.15 -2.15z"/><path d="M1295.0 365.4l2.15 2.15l-2.15 2.15l-2.15 -2.15z"/><path d="M1297.0 369.8l2.15 2.15l-2.15 2.15l-2.15 -2.15z"/><path d="M1295.0 376.8l2.15 2.15l-2.15 2.15l-2.15 -2.15z"/><path d="M1299.0 361.5l2.15 2.15l-2.15 2.15l-2.15 -2.15z"/><path d="M1299.0 384.6l2.15 2.15l-2.15 2.15l-2.15 -2.15z"/><path d="M1303.1 381.3l2.15 2.15l-2.15 2.15l-2.15 -2.15z"/><path d="M1305.1 372.7l2.15 2.15l-2.15 2.15l-2.15 -2.15z"/><path d="M1307.1 368.6l2.15 2.15l-2.15 2.15l-2.15 -2.15z"/><path d="M1310.1 371.5l2.15 2.15l-2.15 2.15l-2.15 -2.15z"/><path d="M1310.1 386.4l2.15 2.15l-2.15 2.15l-2.15 -2.15z"/><path d="M1312.0 367.7l2.15 2.15l-2.15 2.15l-2.15 -2.15z"/><path d="M1314.0 365.9l2.15 2.15l-2.15 2.15l-2.15 -2.15z"/><path d="M1316.0 368.3l2.15 2.15l-2.15 2.15l-2.15 -2.15z"/><path d="M1314.0 386.4l2.15 2.15l-2.15 2.15l-2.15 -2.15z"/><path d="M1320.0 378.9l2.15 2.15l-2.15 2.15l-2.15 -2.15z"/><path d="M1324.0 376.1l2.15 2.15l-2.15 2.15l-2.15 -2.15z"/><path d="M1325.9 385.0l2.15 2.15l-2.15 2.15l-2.15 -2.15z"/><path d="M1231.2 404.1l2.15 2.15l-2.15 2.15l-2.15 -2.15z"/><path d="M1233.2 403.4l2.15 2.15l-2.15 2.15l-2.15 -2.15z"/><path d="M1237.2 400.5l2.15 2.15l-2.15 2.15l-2.15 -2.15z"/><path d="M1239.1 406.6l2.15 2.15l-2.15 2.15l-2.15 -2.15z"/><path d="M1243.1 399.8l2.15 2.15l-2.15 2.15l-2.15 -2.15z"/><path d="M1247.1 398.3l2.15 2.15l-2.15 2.15l-2.15 -2.15z"/><path d="M1249.1 403.5l2.15 2.15l-2.15 2.15l-2.15 -2.15z"/><path d="M1253.0 400.5l2.15 2.15l-2.15 2.15l-2.15 -2.15z"/><path d="M1256.2 403.4l2.15 2.15l-2.15 2.15l-2.15 -2.15z"/><path d="M1266.0 166.9l2.15 2.15l-2.15 2.15l-2.15 -2.15z"/><path d="M1270.2 169.4l2.15 2.15l-2.15 2.15l-2.15 -2.15z"/><path d="M1276.2 172.8l2.15 2.15l-2.15 2.15l-2.15 -2.15z"/><path d="M1278.1 168.4l2.15 2.15l-2.15 2.15l-2.15 -2.15z"/><path d="M1327.9 169.8l2.15 2.15l-2.15 2.15l-2.15 -2.15z"/><path d="M1330.4 165.2l2.15 2.15l-2.15 2.15l-2.15 -2.15z"/><path d="M1334.2 164.8l2.15 2.15l-2.15 2.15l-2.15 -2.15z"/><path d="M1345.0 165.3l2.15 2.15l-2.15 2.15l-2.15 -2.15z"/><path d="M1353.1 165.9l2.15 2.15l-2.15 2.15l-2.15 -2.15z"/><path d="M1356.9 166.1l2.15 2.15l-2.15 2.15l-2.15 -2.15z"/><path d="M1367.9 167.8l2.15 2.15l-2.15 2.15l-2.15 -2.15z"/><path d="M1369.8 166.5l2.15 2.15l-2.15 2.15l-2.15 -2.15z"/><path d="M1372.1 164.8l2.15 2.15l-2.15 2.15l-2.15 -2.15z"/><path d="M1384.0 163.8l2.15 2.15l-2.15 2.15l-2.15 -2.15z"/><path d="M1446.9 164.8l2.15 2.15l-2.15 2.15l-2.15 -2.15z"/><path d="M1459.0 164.2l2.15 2.15l-2.15 2.15l-2.15 -2.15z"/><path d="M1287.1 181.5l2.15 2.15l-2.15 2.15l-2.15 -2.15z"/><path d="M1289.0 181.5l2.15 2.15l-2.15 2.15l-2.15 -2.15z"/><path d="M1295.2 180.3l2.15 2.15l-2.15 2.15l-2.15 -2.15z"/><path d="M1299.2 182.3l2.15 2.15l-2.15 2.15l-2.15 -2.15z"/><path d="M1303.1 179.4l2.15 2.15l-2.15 2.15l-2.15 -2.15z"/><path d="M1310.2 181.7l2.15 2.15l-2.15 2.15l-2.15 -2.15z"/><path d="M1316.2 183.4l2.15 2.15l-2.15 2.15l-2.15 -2.15z"/><path d="M1324.0 177.7l2.15 2.15l-2.15 2.15l-2.15 -2.15z"/><path d="M1324.6 180.9l2.15 2.15l-2.15 2.15l-2.15 -2.15z"/><path d="M1327.9 182.5l2.15 2.15l-2.15 2.15l-2.15 -2.15z"/><path d="M1332.3 190.9l2.15 2.15l-2.15 2.15l-2.15 -2.15z"/><path d="M1334.2 189.6l2.15 2.15l-2.15 2.15l-2.15 -2.15z"/><path d="M1337.1 186.3l2.15 2.15l-2.15 2.15l-2.15 -2.15z"/><path d="M1339.0 188.6l2.15 2.15l-2.15 2.15l-2.15 -2.15z"/><path d="M1341.0 187.1l2.15 2.15l-2.15 2.15l-2.15 -2.15z"/><path d="M1341.9 184.2l2.15 2.15l-2.15 2.15l-2.15 -2.15z"/><path d="M1343.3 184.2l2.15 2.15l-2.15 2.15l-2.15 -2.15z"/><path d="M1347.1 187.5l2.15 2.15l-2.15 2.15l-2.15 -2.15z"/><path d="M1348.9 183.4l2.15 2.15l-2.15 2.15l-2.15 -2.15z"/><path d="M1351.2 190.9l2.15 2.15l-2.15 2.15l-2.15 -2.15z"/><path d="M1355.0 186.3l2.15 2.15l-2.15 2.15l-2.15 -2.15z"/><path d="M1361.2 187.8l2.15 2.15l-2.15 2.15l-2.15 -2.15z"/><path d="M1364.0 191.9l2.15 2.15l-2.15 2.15l-2.15 -2.15z"/><path d="M1366.0 180.2l2.15 2.15l-2.15 2.15l-2.15 -2.15z"/><path d="M1366.0 190.5l2.15 2.15l-2.15 2.15l-2.15 -2.15z"/><path d="M1374.0 191.7l2.15 2.15l-2.15 2.15l-2.15 -2.15z"/><path d="M1376.2 185.9l2.15 2.15l-2.15 2.15l-2.15 -2.15z"/><path d="M1378.5 185.2l2.15 2.15l-2.15 2.15l-2.15 -2.15z"/><path d="M1382.1 184.0l2.15 2.15l-2.15 2.15l-2.15 -2.15z"/><path d="M1386.2 197.3l2.15 2.15l-2.15 2.15l-2.15 -2.15z"/><path d="M1388.1 184.2l2.15 2.15l-2.15 2.15l-2.15 -2.15z"/><path d="M1390.2 195.3l2.15 2.15l-2.15 2.15l-2.15 -2.15z"/><path d="M1393.1 189.8l2.15 2.15l-2.15 2.15l-2.15 -2.15z"/><path d="M1397.1 210.3l2.15 2.15l-2.15 2.15l-2.15 -2.15z"/><path d="M1399.0 222.3l2.15 2.15l-2.15 2.15l-2.15 -2.15z"/><path d="M1403.1 188.0l2.15 2.15l-2.15 2.15l-2.15 -2.15z"/><path d="M1405.0 186.5l2.15 2.15l-2.15 2.15l-2.15 -2.15z"/><path d="M1409.2 189.4l2.15 2.15l-2.15 2.15l-2.15 -2.15z"/><path d="M1413.3 190.5l2.15 2.15l-2.15 2.15l-2.15 -2.15z"/><path d="M1417.1 186.9l2.15 2.15l-2.15 2.15l-2.15 -2.15z"/><path d="M1420.2 181.1l2.15 2.15l-2.15 2.15l-2.15 -2.15z"/><path d="M1426.2 191.3l2.15 2.15l-2.15 2.15l-2.15 -2.15z"/><path d="M1430.2 185.2l2.15 2.15l-2.15 2.15l-2.15 -2.15z"/><path d="M1434.2 189.8l2.15 2.15l-2.15 2.15l-2.15 -2.15z"/><path d="M1453.1 188.0l2.15 2.15l-2.15 2.15l-2.15 -2.15z"/><path d="M1469.2 223.0l2.15 2.15l-2.15 2.15l-2.15 -2.15z"/><path d="M1478.1 189.8l2.15 2.15l-2.15 2.15l-2.15 -2.15z"/><path d="M1490.2 189.8l2.15 2.15l-2.15 2.15l-2.15 -2.15z"/><path d="M1511.2 195.3l2.15 2.15l-2.15 2.15l-2.15 -2.15z"/><path d="M1553.1 195.3l2.15 2.15l-2.15 2.15l-2.15 -2.15z"/><path d="M1359.0 218.6l2.15 2.15l-2.15 2.15l-2.15 -2.15z"/><path d="M1351.2 251.7l2.15 2.15l-2.15 2.15l-2.15 -2.15z"/><path d="M1440.0 258.6l2.15 2.15l-2.15 2.15l-2.15 -2.15z"/><path d="M1285.2 283.6l2.15 2.15l-2.15 2.15l-2.15 -2.15z"/><path d="M1270.2 400.0l2.15 2.15l-2.15 2.15l-2.15 -2.15z"/><path d="M1285.2 397.7l2.15 2.15l-2.15 2.15l-2.15 -2.15z"/><path d="M1301.2 391.9l2.15 2.15l-2.15 2.15l-2.15 -2.15z"/><path d="M1303.1 404.2l2.15 2.15l-2.15 2.15l-2.15 -2.15z"/><path d="M1330.2 388.8l2.15 2.15l-2.15 2.15l-2.15 -2.15z"/><path d="M1318.1 392.3l2.15 2.15l-2.15 2.15l-2.15 -2.15z"/><path d="M1320.2 390.9l2.15 2.15l-2.15 2.15l-2.15 -2.15z"/><path d="M1322.1 392.9l2.15 2.15l-2.15 2.15l-2.15 -2.15z"/><path d="M1327.9 390.9l2.15 2.15l-2.15 2.15l-2.15 -2.15z"/><path d="M1327.9 394.2l2.15 2.15l-2.15 2.15l-2.15 -2.15z"/><path d="M1334.2 394.8l2.15 2.15l-2.15 2.15l-2.15 -2.15z"/><path d="M1332.3 398.0l2.15 2.15l-2.15 2.15l-2.15 -2.15z"/><path d="M1334.2 397.5l2.15 2.15l-2.15 2.15l-2.15 -2.15z"/><path d="M1324.0 402.9l2.15 2.15l-2.15 2.15l-2.15 -2.15z"/><path d="M1339.0 400.4l2.15 2.15l-2.15 2.15l-2.15 -2.15z"/><path d="M1341.0 401.9l2.15 2.15l-2.15 2.15l-2.15 -2.15z"/><path d="M1342.9 400.9l2.15 2.15l-2.15 2.15l-2.15 -2.15z"/><path d="M1347.1 399.4l2.15 2.15l-2.15 2.15l-2.15 -2.15z"/><path d="M1337.1 403.8l2.15 2.15l-2.15 2.15l-2.15 -2.15z"/><path d="M1345.0 408.2l2.15 2.15l-2.15 2.15l-2.15 -2.15z"/><path d="M1351.2 401.7l2.15 2.15l-2.15 2.15l-2.15 -2.15z"/><path d="M1355.0 402.9l2.15 2.15l-2.15 2.15l-2.15 -2.15z"/><path d="M1357.1 406.3l2.15 2.15l-2.15 2.15l-2.15 -2.15z"/><path d="M1364.0 401.5l2.15 2.15l-2.15 2.15l-2.15 -2.15z"/><path d="M1368.1 398.8l2.15 2.15l-2.15 2.15l-2.15 -2.15z"/><path d="M1366.0 405.4l2.15 2.15l-2.15 2.15l-2.15 -2.15z"/><path d="M1366.0 408.2l2.15 2.15l-2.15 2.15l-2.15 -2.15z"/><path d="M1353.1 411.9l2.15 2.15l-2.15 2.15l-2.15 -2.15z"/><path d="M1361.2 413.2l2.15 2.15l-2.15 2.15l-2.15 -2.15z"/><path d="M1349.0 416.1l2.15 2.15l-2.15 2.15l-2.15 -2.15z"/><path d="M1359.0 416.7l2.15 2.15l-2.15 2.15l-2.15 -2.15z"/><path d="M1351.2 425.9l2.15 2.15l-2.15 2.15l-2.15 -2.15z"/><path d="M1370.0 418.6l2.15 2.15l-2.15 2.15l-2.15 -2.15z"/><path d="M1372.1 414.8l2.15 2.15l-2.15 2.15l-2.15 -2.15z"/><path d="M1374.0 414.8l2.15 2.15l-2.15 2.15l-2.15 -2.15z"/><path d="M1376.2 416.9l2.15 2.15l-2.15 2.15l-2.15 -2.15z"/><path d="M1378.1 414.0l2.15 2.15l-2.15 2.15l-2.15 -2.15z"/><path d="M1382.1 406.1l2.15 2.15l-2.15 2.15l-2.15 -2.15z"/><path d="M1384.0 405.4l2.15 2.15l-2.15 2.15l-2.15 -2.15z"/><path d="M1386.2 415.2l2.15 2.15l-2.15 2.15l-2.15 -2.15z"/><path d="M1388.1 415.5l2.15 2.15l-2.15 2.15l-2.15 -2.15z"/><path d="M1390.2 408.6l2.15 2.15l-2.15 2.15l-2.15 -2.15z"/><path d="M1393.1 410.9l2.15 2.15l-2.15 2.15l-2.15 -2.15z"/><path d="M1397.1 417.9l2.15 2.15l-2.15 2.15l-2.15 -2.15z"/><path d="M1399.0 411.9l2.15 2.15l-2.15 2.15l-2.15 -2.15z"/><path d="M1403.1 410.9l2.15 2.15l-2.15 2.15l-2.15 -2.15z"/><path d="M1405.0 401.7l2.15 2.15l-2.15 2.15l-2.15 -2.15z"/><path d="M1409.2 418.4l2.15 2.15l-2.15 2.15l-2.15 -2.15z"/><path d="M1413.3 419.0l2.15 2.15l-2.15 2.15l-2.15 -2.15z"/><path d="M1420.2 418.6l2.15 2.15l-2.15 2.15l-2.15 -2.15z"/><path d="M1434.2 421.9l2.15 2.15l-2.15 2.15l-2.15 -2.15z"/><path d="M1417.1 431.5l2.15 2.15l-2.15 2.15l-2.15 -2.15z"/><path d="M1426.2 446.5l2.15 2.15l-2.15 2.15l-2.15 -2.15z"/><path d="M1430.2 447.5l2.15 2.15l-2.15 2.15l-2.15 -2.15z"/><path d="M1440.0 454.6l2.15 2.15l-2.15 2.15l-2.15 -2.15z"/><path d="M1447.1 457.9l2.15 2.15l-2.15 2.15l-2.15 -2.15z"/><path d="M1453.1 486.1l2.15 2.15l-2.15 2.15l-2.15 -2.15z"/><path d="M1459.0 481.7l2.15 2.15l-2.15 2.15l-2.15 -2.15z"/><path d="M1467.1 491.9l2.15 2.15l-2.15 2.15l-2.15 -2.15z"/><path d="M1478.1 483.0l2.15 2.15l-2.15 2.15l-2.15 -2.15z"/><path d="M1490.2 484.6l2.15 2.15l-2.15 2.15l-2.15 -2.15z"/><path d="M1511.2 483.8l2.15 2.15l-2.15 2.15l-2.15 -2.15z"/><path d="M1262.1 504.4l2.15 2.15l-2.15 2.15l-2.15 -2.15z"/><path d="M1264.0 505.7l2.15 2.15l-2.15 2.15l-2.15 -2.15z"/><path d="M1266.0 510.5l2.15 2.15l-2.15 2.15l-2.15 -2.15z"/><path d="M1272.1 509.2l2.15 2.15l-2.15 2.15l-2.15 -2.15z"/><path d="M1314.0 508.8l2.15 2.15l-2.15 2.15l-2.15 -2.15z"/><path d="M1278.1 512.5l2.15 2.15l-2.15 2.15l-2.15 -2.15z"/><path d="M1262.1 516.3l2.15 2.15l-2.15 2.15l-2.15 -2.15z"/><path d="M1267.9 516.7l2.15 2.15l-2.15 2.15l-2.15 -2.15z"/><path d="M1274.0 518.6l2.15 2.15l-2.15 2.15l-2.15 -2.15z"/><path d="M1278.1 515.2l2.15 2.15l-2.15 2.15l-2.15 -2.15z"/><path d="M1281.0 517.1l2.15 2.15l-2.15 2.15l-2.15 -2.15z"/><path d="M1285.2 524.0l2.15 2.15l-2.15 2.15l-2.15 -2.15z"/><path d="M1287.1 515.7l2.15 2.15l-2.15 2.15l-2.15 -2.15z"/><path d="M1291.0 525.9l2.15 2.15l-2.15 2.15l-2.15 -2.15z"/><path d="M1292.9 517.1l2.15 2.15l-2.15 2.15l-2.15 -2.15z"/><path d="M1295.2 519.6l2.15 2.15l-2.15 2.15l-2.15 -2.15z"/><path d="M1299.2 520.2l2.15 2.15l-2.15 2.15l-2.15 -2.15z"/><path d="M1301.2 522.9l2.15 2.15l-2.15 2.15l-2.15 -2.15z"/><path d="M1305.0 515.7l2.15 2.15l-2.15 2.15l-2.15 -2.15z"/><path d="M1306.9 524.8l2.15 2.15l-2.15 2.15l-2.15 -2.15z"/><path d="M1310.2 525.9l2.15 2.15l-2.15 2.15l-2.15 -2.15z"/><path d="M1312.1 518.6l2.15 2.15l-2.15 2.15l-2.15 -2.15z"/><path d="M1314.0 523.4l2.15 2.15l-2.15 2.15l-2.15 -2.15z"/><path d="M1318.1 516.7l2.15 2.15l-2.15 2.15l-2.15 -2.15z"/><path d="M1320.2 521.5l2.15 2.15l-2.15 2.15l-2.15 -2.15z"/><path d="M1322.1 525.9l2.15 2.15l-2.15 2.15l-2.15 -2.15z"/><path d="M1324.0 524.4l2.15 2.15l-2.15 2.15l-2.15 -2.15z"/><path d="M1326.2 519.6l2.15 2.15l-2.15 2.15l-2.15 -2.15z"/><path d="M1327.9 515.2l2.15 2.15l-2.15 2.15l-2.15 -2.15z"/><path d="M1327.9 521.5l2.15 2.15l-2.15 2.15l-2.15 -2.15z"/><path d="M1330.2 526.7l2.15 2.15l-2.15 2.15l-2.15 -2.15z"/><path d="M1332.3 524.8l2.15 2.15l-2.15 2.15l-2.15 -2.15z"/><path d="M1334.2 515.7l2.15 2.15l-2.15 2.15l-2.15 -2.15z"/><path d="M1337.1 523.4l2.15 2.15l-2.15 2.15l-2.15 -2.15z"/><path d="M1339.0 522.5l2.15 2.15l-2.15 2.15l-2.15 -2.15z"/><path d="M1342.9 524.4l2.15 2.15l-2.15 2.15l-2.15 -2.15z"/><path d="M1345.0 522.5l2.15 2.15l-2.15 2.15l-2.15 -2.15z"/><path d="M1347.1 523.4l2.15 2.15l-2.15 2.15l-2.15 -2.15z"/><path d="M1351.2 525.0l2.15 2.15l-2.15 2.15l-2.15 -2.15z"/><path d="M1355.0 525.9l2.15 2.15l-2.15 2.15l-2.15 -2.15z"/><path d="M1359.0 526.7l2.15 2.15l-2.15 2.15l-2.15 -2.15z"/><path d="M1361.2 526.3l2.15 2.15l-2.15 2.15l-2.15 -2.15z"/><path d="M1364.0 518.0l2.15 2.15l-2.15 2.15l-2.15 -2.15z"/><path d="M1366.0 525.4l2.15 2.15l-2.15 2.15l-2.15 -2.15z"/><path d="M1368.1 524.4l2.15 2.15l-2.15 2.15l-2.15 -2.15z"/><path d="M1370.0 525.9l2.15 2.15l-2.15 2.15l-2.15 -2.15z"/><path d="M1378.1 525.4l2.15 2.15l-2.15 2.15l-2.15 -2.15z"/><path d="M1388.1 528.6l2.15 2.15l-2.15 2.15l-2.15 -2.15z"/><path d="M1386.2 535.5l2.15 2.15l-2.15 2.15l-2.15 -2.15z"/><path d="M1384.0 538.2l2.15 2.15l-2.15 2.15l-2.15 -2.15z"/><path d="M1357.1 538.8l2.15 2.15l-2.15 2.15l-2.15 -2.15z"/><path d="M1372.1 539.4l2.15 2.15l-2.15 2.15l-2.15 -2.15z"/><path d="M1374.0 538.8l2.15 2.15l-2.15 2.15l-2.15 -2.15z"/><path d="M1376.2 538.2l2.15 2.15l-2.15 2.15l-2.15 -2.15z"/><path d="M1390.2 538.2l2.15 2.15l-2.15 2.15l-2.15 -2.15z"/><path d="M1393.1 538.8l2.15 2.15l-2.15 2.15l-2.15 -2.15z"/><path d="M1397.1 537.5l2.15 2.15l-2.15 2.15l-2.15 -2.15z"/><path d="M1399.0 536.9l2.15 2.15l-2.15 2.15l-2.15 -2.15z"/><path d="M1403.1 538.8l2.15 2.15l-2.15 2.15l-2.15 -2.15z"/><path d="M1405.0 537.5l2.15 2.15l-2.15 2.15l-2.15 -2.15z"/><path d="M1409.2 531.7l2.15 2.15l-2.15 2.15l-2.15 -2.15z"/><path d="M1413.3 536.3l2.15 2.15l-2.15 2.15l-2.15 -2.15z"/><path d="M1417.1 538.8l2.15 2.15l-2.15 2.15l-2.15 -2.15z"/><path d="M1430.2 538.4l2.15 2.15l-2.15 2.15l-2.15 -2.15z"/><path d="M1434.2 539.4l2.15 2.15l-2.15 2.15l-2.15 -2.15z"/><path d="M1447.1 539.4l2.15 2.15l-2.15 2.15l-2.15 -2.15z"/><path d="M1467.1 538.8l2.15 2.15l-2.15 2.15l-2.15 -2.15z"/><path d="M1478.1 539.4l2.15 2.15l-2.15 2.15l-2.15 -2.15z"/><path d="M1490.2 539.4l2.15 2.15l-2.15 2.15l-2.15 -2.15z"/><path d="M1511.2 539.8l2.15 2.15l-2.15 2.15l-2.15 -2.15z"/><path d="M1550.2 527.9l2.15 2.15l-2.15 2.15l-2.15 -2.15z"/><path d="M1550.2 540.4l2.15 2.15l-2.15 2.15l-2.15 -2.15z"/><path d="M1270.2 593.0l2.15 2.15l-2.15 2.15l-2.15 -2.15z"/><path d="M1281.0 593.0l2.15 2.15l-2.15 2.15l-2.15 -2.15z"/><path d="M1345.0 593.0l2.15 2.15l-2.15 2.15l-2.15 -2.15z"/><path d="M1382.1 593.0l2.15 2.15l-2.15 2.15l-2.15 -2.15z"/><path d="M1420.2 593.0l2.15 2.15l-2.15 2.15l-2.15 -2.15z"/><path d="M1426.2 593.0l2.15 2.15l-2.15 2.15l-2.15 -2.15z"/><path d="M1440.0 593.0l2.15 2.15l-2.15 2.15l-2.15 -2.15z"/><path d="M1453.1 593.0l2.15 2.15l-2.15 2.15l-2.15 -2.15z"/><path d="M1459.0 593.0l2.15 2.15l-2.15 2.15l-2.15 -2.15z"/><path d="M1181.1 511.9l2.15 2.15l-2.15 2.15l-2.15 -2.15z"/><path d="M1193.0 509.9l2.15 2.15l-2.15 2.15l-2.15 -2.15z"/><path d="M1216.0 514.9l2.15 2.15l-2.15 2.15l-2.15 -2.15z"/><path d="M1220.0 510.6l2.15 2.15l-2.15 2.15l-2.15 -2.15z"/><path d="M1224.1 512.5l2.15 2.15l-2.15 2.15l-2.15 -2.15z"/><path d="M1233.0 514.6l2.15 2.15l-2.15 2.15l-2.15 -2.15z"/><path d="M1243.1 511.6l2.15 2.15l-2.15 2.15l-2.15 -2.15z"/><path d="M1245.1 511.6l2.15 2.15l-2.15 2.15l-2.15 -2.15z"/><path d="M1247.1 512.5l2.15 2.15l-2.15 2.15l-2.15 -2.15z"/><path d="M1253.0 515.9l2.15 2.15l-2.15 2.15l-2.15 -2.15z"/><path d="M1256.0 514.9l2.15 2.15l-2.15 2.15l-2.15 -2.15z"/><path d="M1260.0 513.9l2.15 2.15l-2.15 2.15l-2.15 -2.15z"/><path d="M1260.0 516.7l2.15 2.15l-2.15 2.15l-2.15 -2.15z"/><path d="M1265.9 516.7l2.15 2.15l-2.15 2.15l-2.15 -2.15z"/><path d="M1270.2 516.7l2.15 2.15l-2.15 2.15l-2.15 -2.15z"/><path d="M1158.1 589.6l2.15 2.15l-2.15 2.15l-2.15 -2.15z"/><path d="M1164.1 592.8l2.15 2.15l-2.15 2.15l-2.15 -2.15z"/><path d="M1170.2 590.9l2.15 2.15l-2.15 2.15l-2.15 -2.15z"/><path d="M1177.2 591.7l2.15 2.15l-2.15 2.15l-2.15 -2.15z"/><path d="M1185.1 582.0l2.15 2.15l-2.15 2.15l-2.15 -2.15z"/><path d="M1189.1 590.1l2.15 2.15l-2.15 2.15l-2.15 -2.15z"/><path d="M1197.1 588.6l2.15 2.15l-2.15 2.15l-2.15 -2.15z"/><path d="M1199.1 591.9l2.15 2.15l-2.15 2.15l-2.15 -2.15z"/><path d="M1204.1 579.5l2.15 2.15l-2.15 2.15l-2.15 -2.15z"/><path d="M1208.1 584.9l2.15 2.15l-2.15 2.15l-2.15 -2.15z"/><path d="M1210.1 582.9l2.15 2.15l-2.15 2.15l-2.15 -2.15z"/><path d="M1214.1 583.5l2.15 2.15l-2.15 2.15l-2.15 -2.15z"/><path d="M1218.1 579.5l2.15 2.15l-2.15 2.15l-2.15 -2.15z"/><path d="M1222.0 593.0l2.15 2.15l-2.15 2.15l-2.15 -2.15z"/><path d="M1226.1 580.3l2.15 2.15l-2.15 2.15l-2.15 -2.15z"/><path d="M1229.2 579.8l2.15 2.15l-2.15 2.15l-2.15 -2.15z"/><path d="M1231.1 592.8l2.15 2.15l-2.15 2.15l-2.15 -2.15z"/><path d="M1235.1 585.4l2.15 2.15l-2.15 2.15l-2.15 -2.15z"/><path d="M1237.1 581.5l2.15 2.15l-2.15 2.15l-2.15 -2.15z"/><path d="M1239.2 586.2l2.15 2.15l-2.15 2.15l-2.15 -2.15z"/><path d="M1241.1 593.0l2.15 2.15l-2.15 2.15l-2.15 -2.15z"/><path d="M1247.1 592.3l2.15 2.15l-2.15 2.15l-2.15 -2.15z"/><path d="M1249.0 591.5l2.15 2.15l-2.15 2.15l-2.15 -2.15z"/><path d="M1251.1 579.5l2.15 2.15l-2.15 2.15l-2.15 -2.15z"/><path d="M1253.0 590.6l2.15 2.15l-2.15 2.15l-2.15 -2.15z"/><path d="M1177.0 165.0l2.15 2.15l-2.15 2.15l-2.15 -2.15z"/><path d="M1179.0 165.0l2.15 2.15l-2.15 2.15l-2.15 -2.15z"/><path d="M1181.0 164.0l2.15 2.15l-2.15 2.15l-2.15 -2.15z"/><path d="M1185.0 164.0l2.15 2.15l-2.15 2.15l-2.15 -2.15z"/><path d="M1187.0 165.4l2.15 2.15l-2.15 2.15l-2.15 -2.15z"/><path d="M1189.0 165.4l2.15 2.15l-2.15 2.15l-2.15 -2.15z"/><path d="M1191.0 164.0l2.15 2.15l-2.15 2.15l-2.15 -2.15z"/><path d="M1193.0 165.0l2.15 2.15l-2.15 2.15l-2.15 -2.15z"/><path d="M1196.0 164.0l2.15 2.15l-2.15 2.15l-2.15 -2.15z"/><path d="M1198.0 164.0l2.15 2.15l-2.15 2.15l-2.15 -2.15z"/><path d="M1202.0 165.0l2.15 2.15l-2.15 2.15l-2.15 -2.15z"/><path d="M1204.0 165.4l2.15 2.15l-2.15 2.15l-2.15 -2.15z"/><path d="M1206.0 164.5l2.15 2.15l-2.15 2.15l-2.15 -2.15z"/><path d="M1210.0 164.0l2.15 2.15l-2.15 2.15l-2.15 -2.15z"/><path d="M1214.0 165.4l2.15 2.15l-2.15 2.15l-2.15 -2.15z"/><path d="M1217.0 164.0l2.15 2.15l-2.15 2.15l-2.15 -2.15z"/><path d="M1219.0 164.0l2.15 2.15l-2.15 2.15l-2.15 -2.15z"/><path d="M1223.0 164.5l2.15 2.15l-2.15 2.15l-2.15 -2.15z"/><path d="M1225.0 165.0l2.15 2.15l-2.15 2.15l-2.15 -2.15z"/><path d="M1227.0 165.4l2.15 2.15l-2.15 2.15l-2.15 -2.15z"/><path d="M1229.0 165.4l2.15 2.15l-2.15 2.15l-2.15 -2.15z"/><path d="M1231.0 165.4l2.15 2.15l-2.15 2.15l-2.15 -2.15z"/><path d="M1233.0 164.0l2.15 2.15l-2.15 2.15l-2.15 -2.15z"/><path d="M1237.0 165.4l2.15 2.15l-2.15 2.15l-2.15 -2.15z"/><path d="M1239.0 165.0l2.15 2.15l-2.15 2.15l-2.15 -2.15z"/><path d="M1241.0 165.4l2.15 2.15l-2.15 2.15l-2.15 -2.15z"/><path d="M1243.0 165.4l2.15 2.15l-2.15 2.15l-2.15 -2.15z"/><path d="M1245.0 165.4l2.15 2.15l-2.15 2.15l-2.15 -2.15z"/><path d="M1247.0 165.0l2.15 2.15l-2.15 2.15l-2.15 -2.15z"/><path d="M1251.0 165.0l2.15 2.15l-2.15 2.15l-2.15 -2.15z"/><path d="M1253.0 165.0l2.15 2.15l-2.15 2.15l-2.15 -2.15z"/><path d="M1257.0 165.0l2.15 2.15l-2.15 2.15l-2.15 -2.15z"/><path d="M1259.0 165.0l2.15 2.15l-2.15 2.15l-2.15 -2.15z"/><path d="M1261.0 164.5l2.15 2.15l-2.15 2.15l-2.15 -2.15z"/><path d="M1263.0 164.0l2.15 2.15l-2.15 2.15l-2.15 -2.15z"/><path d="M1267.0 165.0l2.15 2.15l-2.15 2.15l-2.15 -2.15z"/><path d="M1271.0 165.0l2.15 2.15l-2.15 2.15l-2.15 -2.15z"/><path d="M1273.0 165.8l2.15 2.15l-2.15 2.15l-2.15 -2.15z"/><path d="M1276.0 165.0l2.15 2.15l-2.15 2.15l-2.15 -2.15z"/><path d="M1280.0 164.0l2.15 2.15l-2.15 2.15l-2.15 -2.15z"/><path d="M1282.0 165.4l2.15 2.15l-2.15 2.15l-2.15 -2.15z"/><path d="M1285.0 164.5l2.15 2.15l-2.15 2.15l-2.15 -2.15z"/><path d="M1287.0 164.5l2.15 2.15l-2.15 2.15l-2.15 -2.15z"/><path d="M1290.0 165.0l2.15 2.15l-2.15 2.15l-2.15 -2.15z"/><path d="M1292.0 165.8l2.15 2.15l-2.15 2.15l-2.15 -2.15z"/><path d="M1294.0 165.4l2.15 2.15l-2.15 2.15l-2.15 -2.15z"/><path d="M1298.0 165.0l2.15 2.15l-2.15 2.15l-2.15 -2.15z"/><path d="M1300.0 165.8l2.15 2.15l-2.15 2.15l-2.15 -2.15z"/><path d="M1302.0 165.4l2.15 2.15l-2.15 2.15l-2.15 -2.15z"/><path d="M1305.0 165.4l2.15 2.15l-2.15 2.15l-2.15 -2.15z"/><path d="M1308.0 164.0l2.15 2.15l-2.15 2.15l-2.15 -2.15z"/><path d="M1310.0 165.0l2.15 2.15l-2.15 2.15l-2.15 -2.15z"/><path d="M1313.0 165.8l2.15 2.15l-2.15 2.15l-2.15 -2.15z"/><path d="M1315.0 164.0l2.15 2.15l-2.15 2.15l-2.15 -2.15z"/><path d="M1317.0 165.8l2.15 2.15l-2.15 2.15l-2.15 -2.15z"/><path d="M1321.0 165.8l2.15 2.15l-2.15 2.15l-2.15 -2.15z"/><path d="M1324.0 165.0l2.15 2.15l-2.15 2.15l-2.15 -2.15z"/><path d="M1199.1 167.8l2.15 2.15l-2.15 2.15l-2.15 -2.15z"/><path d="M1226.1 167.2l2.15 2.15l-2.15 2.15l-2.15 -2.15z"/><path d="M1249.2 167.7l2.15 2.15l-2.15 2.15l-2.15 -2.15z"/><path d="M1256.1 170.8l2.15 2.15l-2.15 2.15l-2.15 -2.15z"/></g><g fill="#ff0a50"><rect x="747.0" y="165.7" width="4" height="4"/><rect x="498.1" y="307.4" width="4" height="4"/><rect x="596.9" y="305.6" width="4" height="4"/><rect x="639.0" y="304.8" width="4" height="4"/><rect x="659.9" y="304.8" width="4" height="4"/><rect x="671.9" y="310.7" width="4" height="4"/><rect x="681.9" y="304.8" width="4" height="4"/><rect x="693.1" y="304.8" width="4" height="4"/><rect x="701.0" y="304.8" width="4" height="4"/><rect x="709.2" y="304.8" width="4" height="4"/><rect x="718.1" y="304.8" width="4" height="4"/><rect x="724.0" y="304.8" width="4" height="4"/><rect x="730.1" y="306.9" width="4" height="4"/><rect x="739.0" y="304.8" width="4" height="4"/><rect x="755.1" y="304.8" width="4" height="4"/><rect x="763.3" y="304.8" width="4" height="4"/><rect x="772.0" y="304.8" width="4" height="4"/><rect x="780.1" y="304.8" width="4" height="4"/><rect x="788.1" y="304.8" width="4" height="4"/><rect x="803.1" y="305.1" width="4" height="4"/><rect x="815.1" y="305.1" width="4" height="4"/><rect x="828.1" y="305.9" width="4" height="4"/><rect x="853.1" y="304.8" width="4" height="4"/><rect x="596.9" y="360.0" width="4" height="4"/><rect x="639.0" y="348.0" width="4" height="4"/><rect x="659.9" y="344.9" width="4" height="4"/><rect x="671.9" y="349.3" width="4" height="4"/><rect x="681.9" y="343.1" width="4" height="4"/><rect x="693.1" y="344.4" width="4" height="4"/><rect x="701.0" y="346.2" width="4" height="4"/><rect x="709.2" y="342.4" width="4" height="4"/><rect x="718.1" y="340.6" width="4" height="4"/><rect x="724.0" y="351.0" width="4" height="4"/><rect x="730.1" y="342.6" width="4" height="4"/><rect x="739.0" y="345.9" width="4" height="4"/><rect x="747.0" y="345.9" width="4" height="4"/><rect x="755.1" y="344.7" width="4" height="4"/><rect x="761.0" y="347.2" width="4" height="4"/><rect x="772.0" y="344.7" width="4" height="4"/><rect x="780.1" y="344.7" width="4" height="4"/><rect x="788.1" y="343.6" width="4" height="4"/><rect x="803.1" y="348.5" width="4" height="4"/><rect x="815.1" y="347.7" width="4" height="4"/><rect x="828.1" y="342.4" width="4" height="4"/><rect x="853.1" y="343.4" width="4" height="4"/><rect x="659.9" y="442.7" width="4" height="4"/><rect x="671.9" y="442.7" width="4" height="4"/><rect x="681.9" y="442.7" width="4" height="4"/><rect x="693.1" y="443.2" width="4" height="4"/><rect x="709.2" y="442.2" width="4" height="4"/><rect x="718.1" y="442.7" width="4" height="4"/><rect x="724.0" y="442.7" width="4" height="4"/><rect x="730.1" y="442.7" width="4" height="4"/><rect x="747.0" y="442.2" width="4" height="4"/><rect x="755.1" y="443.2" width="4" height="4"/><rect x="761.0" y="442.7" width="4" height="4"/><rect x="780.1" y="442.7" width="4" height="4"/><rect x="788.1" y="442.7" width="4" height="4"/><rect x="828.1" y="442.7" width="4" height="4"/><rect x="498.1" y="577.5" width="4" height="4"/><rect x="496.1" y="636.5" width="4" height="4"/><rect x="596.9" y="636.7" width="4" height="4"/><rect x="639.0" y="636.7" width="4" height="4"/><rect x="701.0" y="635.2" width="4" height="4"/><rect x="772.0" y="635.2" width="4" height="4"/><rect x="803.1" y="635.2" width="4" height="4"/><rect x="851.1" y="635.2" width="4" height="4"/><rect x="739.0" y="577.2" width="4" height="4"/><rect x="815.1" y="577.5" width="4" height="4"/><rect x="934.0" y="233.1" width="4" height="4"/><rect x="1019.0" y="177.7" width="4" height="4"/><rect x="1042.0" y="126.6" width="4" height="4"/><rect x="1057.8" y="131.0" width="4" height="4"/><rect x="1072.9" y="133.0" width="4" height="4"/><rect x="1084.9" y="134.8" width="4" height="4"/><rect x="1100.0" y="126.4" width="4" height="4"/><rect x="1114.0" y="131.0" width="4" height="4"/><rect x="1127.0" y="126.4" width="4" height="4"/><rect x="1137.0" y="125.1" width="4" height="4"/><rect x="1147.9" y="125.6" width="4" height="4"/><rect x="1156.1" y="123.8" width="4" height="4"/><rect x="1162.0" y="124.3" width="4" height="4"/><rect x="1168.1" y="124.8" width="4" height="4"/><rect x="878.2" y="305.1" width="4" height="4"/><rect x="878.2" y="340.8" width="4" height="4"/><rect x="932.0" y="355.9" width="4" height="4"/><rect x="932.0" y="441.4" width="4" height="4"/><rect x="1017.0" y="373.5" width="4" height="4"/><rect x="1017.0" y="383.7" width="4" height="4"/><rect x="1042.0" y="362.8" width="4" height="4"/><rect x="1042.0" y="383.7" width="4" height="4"/><rect x="1057.8" y="363.0" width="4" height="4"/><rect x="1072.9" y="363.0" width="4" height="4"/><rect x="1071.1" y="382.2" width="4" height="4"/><rect x="1084.9" y="362.8" width="4" height="4"/><rect x="1100.0" y="363.0" width="4" height="4"/><rect x="1114.0" y="303.6" width="4" height="4"/><rect x="1127.0" y="303.1" width="4" height="4"/><rect x="878.2" y="577.5" width="4" height="4"/><rect x="1057.8" y="510.4" width="4" height="4"/><rect x="1084.9" y="509.9" width="4" height="4"/><rect x="1100.0" y="510.4" width="4" height="4"/><rect x="1114.0" y="510.4" width="4" height="4"/><rect x="1127.0" y="510.1" width="4" height="4"/><rect x="1137.0" y="591.3" width="4" height="4"/><rect x="1147.9" y="535.9" width="4" height="4"/><rect x="1137.1" y="220.0" width="4" height="4"/><rect x="1148.1" y="231.8" width="4" height="4"/><rect x="1156.1" y="221.2" width="4" height="4"/><rect x="1162.0" y="237.5" width="4" height="4"/><rect x="1168.2" y="239.2" width="4" height="4"/><rect x="1175.2" y="227.1" width="4" height="4"/><rect x="1179.1" y="237.8" width="4" height="4"/><rect x="1183.1" y="228.7" width="4" height="4"/><rect x="1187.1" y="245.8" width="4" height="4"/><rect x="1191.0" y="261.6" width="4" height="4"/><rect x="1195.0" y="259.7" width="4" height="4"/><rect x="1197.1" y="292.8" width="4" height="4"/><rect x="1202.1" y="280.9" width="4" height="4"/><rect x="1206.1" y="283.1" width="4" height="4"/><rect x="1208.1" y="298.5" width="4" height="4"/><rect x="1212.0" y="276.0" width="4" height="4"/><rect x="1214.0" y="282.9" width="4" height="4"/><rect x="1216.0" y="277.9" width="4" height="4"/><rect x="1220.1" y="292.8" width="4" height="4"/><rect x="1222.1" y="273.5" width="4" height="4"/><rect x="1224.1" y="294.5" width="4" height="4"/><rect x="1227.1" y="276.5" width="4" height="4"/><rect x="1233.0" y="294.1" width="4" height="4"/><rect x="1239.1" y="291.8" width="4" height="4"/><rect x="1243.1" y="288.7" width="4" height="4"/><rect x="1251.0" y="280.7" width="4" height="4"/><rect x="1258.0" y="297.8" width="4" height="4"/><rect x="1256.0" y="300.6" width="4" height="4"/><rect x="1235.2" y="368.1" width="4" height="4"/><rect x="1237.1" y="365.3" width="4" height="4"/><rect x="1249.1" y="365.9" width="4" height="4"/><rect x="1245.1" y="378.1" width="4" height="4"/><rect x="1247.1" y="381.6" width="4" height="4"/><rect x="1229.2" y="384.0" width="4" height="4"/><rect x="1260.1" y="382.8" width="4" height="4"/><rect x="1262.1" y="386.6" width="4" height="4"/><rect x="1268.1" y="378.8" width="4" height="4"/><rect x="1279.1" y="374.8" width="4" height="4"/><rect x="1281.1" y="379.9" width="4" height="4"/><rect x="1279.1" y="382.6" width="4" height="4"/><rect x="1287.1" y="374.8" width="4" height="4"/><rect x="1289.1" y="378.5" width="4" height="4"/><rect x="1218.1" y="404.2" width="4" height="4"/><rect x="1231.2" y="451.3" width="4" height="4"/><rect x="1241.1" y="446.8" width="4" height="4"/><rect x="1245.1" y="444.2" width="4" height="4"/><rect x="1251.0" y="447.8" width="4" height="4"/><rect x="1254.2" y="451.5" width="4" height="4"/><rect x="1258.1" y="401.1" width="4" height="4"/><rect x="1264.0" y="126.3" width="4" height="4"/><rect x="1268.2" y="130.1" width="4" height="4"/><rect x="1274.2" y="134.0" width="4" height="4"/><rect x="1276.1" y="128.2" width="4" height="4"/><rect x="1325.9" y="130.1" width="4" height="4"/><rect x="1328.4" y="123.8" width="4" height="4"/><rect x="1332.2" y="123.0" width="4" height="4"/><rect x="1343.0" y="124.3" width="4" height="4"/><rect x="1351.1" y="125.3" width="4" height="4"/><rect x="1354.9" y="125.7" width="4" height="4"/><rect x="1365.9" y="127.6" width="4" height="4"/><rect x="1367.8" y="125.7" width="4" height="4"/><rect x="1370.1" y="123.4" width="4" height="4"/><rect x="1382.0" y="122.0" width="4" height="4"/><rect x="1444.9" y="123.4" width="4" height="4"/><rect x="1457.0" y="122.4" width="4" height="4"/><rect x="1285.1" y="146.5" width="4" height="4"/><rect x="1287.0" y="146.5" width="4" height="4"/><rect x="1293.2" y="144.5" width="4" height="4"/><rect x="1297.2" y="147.4" width="4" height="4"/><rect x="1301.1" y="143.2" width="4" height="4"/><rect x="1308.2" y="147.0" width="4" height="4"/><rect x="1314.2" y="148.8" width="4" height="4"/><rect x="1322.0" y="141.7" width="4" height="4"/><rect x="1322.6" y="145.9" width="4" height="4"/><rect x="1325.9" y="147.8" width="4" height="4"/><rect x="1330.3" y="159.0" width="4" height="4"/><rect x="1332.2" y="157.0" width="4" height="4"/><rect x="1335.1" y="153.2" width="4" height="4"/><rect x="1337.0" y="156.1" width="4" height="4"/><rect x="1339.0" y="154.2" width="4" height="4"/><rect x="1339.9" y="149.9" width="4" height="4"/><rect x="1341.3" y="149.9" width="4" height="4"/><rect x="1345.1" y="154.7" width="4" height="4"/><rect x="1346.9" y="149.0" width="4" height="4"/><rect x="1349.2" y="159.0" width="4" height="4"/><rect x="1353.0" y="153.2" width="4" height="4"/><rect x="1359.2" y="155.1" width="4" height="4"/><rect x="1362.0" y="160.5" width="4" height="4"/><rect x="1364.0" y="144.5" width="4" height="4"/><rect x="1364.0" y="158.4" width="4" height="4"/><rect x="1372.0" y="160.5" width="4" height="4"/><rect x="1374.2" y="152.8" width="4" height="4"/><rect x="1376.5" y="151.3" width="4" height="4"/><rect x="1380.1" y="149.9" width="4" height="4"/><rect x="1384.2" y="168.2" width="4" height="4"/><rect x="1386.1" y="149.9" width="4" height="4"/><rect x="1388.2" y="165.3" width="4" height="4"/><rect x="1391.1" y="158.0" width="4" height="4"/><rect x="1395.1" y="185.9" width="4" height="4"/><rect x="1397.0" y="202.2" width="4" height="4"/><rect x="1401.1" y="155.5" width="4" height="4"/><rect x="1403.0" y="153.6" width="4" height="4"/><rect x="1407.2" y="157.4" width="4" height="4"/><rect x="1411.3" y="158.6" width="4" height="4"/><rect x="1415.1" y="153.8" width="4" height="4"/><rect x="1418.2" y="145.9" width="4" height="4"/><rect x="1424.2" y="159.5" width="4" height="4"/><rect x="1428.2" y="151.7" width="4" height="4"/><rect x="1432.2" y="157.6" width="4" height="4"/><rect x="1451.1" y="155.3" width="4" height="4"/><rect x="1467.2" y="203.4" width="4" height="4"/><rect x="1476.1" y="157.8" width="4" height="4"/><rect x="1488.2" y="157.8" width="4" height="4"/><rect x="1509.2" y="165.3" width="4" height="4"/><rect x="1551.1" y="165.3" width="4" height="4"/><rect x="1357.0" y="197.4" width="4" height="4"/><rect x="1349.2" y="242.0" width="4" height="4"/><rect x="1438.0" y="252.0" width="4" height="4"/><rect x="1283.2" y="286.8" width="4" height="4"/><rect x="1289.0" y="376.7" width="4" height="4"/><rect x="1270.1" y="391.1" width="4" height="4"/><rect x="1276.1" y="395.9" width="4" height="4"/><rect x="1274.2" y="397.8" width="4" height="4"/><rect x="1264.0" y="399.7" width="4" height="4"/><rect x="1264.0" y="407.8" width="4" height="4"/><rect x="1265.9" y="408.8" width="4" height="4"/><rect x="1270.1" y="406.3" width="4" height="4"/><rect x="1272.0" y="407.4" width="4" height="4"/><rect x="1276.1" y="414.0" width="4" height="4"/><rect x="1290.9" y="393.0" width="4" height="4"/><rect x="1297.2" y="393.8" width="4" height="4"/><rect x="1285.1" y="401.7" width="4" height="4"/><rect x="1289.0" y="400.1" width="4" height="4"/><rect x="1293.2" y="399.2" width="4" height="4"/><rect x="1295.1" y="405.5" width="4" height="4"/><rect x="1293.2" y="414.5" width="4" height="4"/><rect x="1301.1" y="420.9" width="4" height="4"/><rect x="1297.2" y="425.1" width="4" height="4"/><rect x="1304.9" y="403.6" width="4" height="4"/><rect x="1303.0" y="408.8" width="4" height="4"/><rect x="1308.2" y="407.8" width="4" height="4"/><rect x="1310.1" y="402.6" width="4" height="4"/><rect x="1312.0" y="400.1" width="4" height="4"/><rect x="1314.2" y="402.6" width="4" height="4"/><rect x="1322.0" y="414.0" width="4" height="4"/><rect x="1318.2" y="417.8" width="4" height="4"/><rect x="1324.2" y="426.3" width="4" height="4"/><rect x="1308.2" y="428.8" width="4" height="4"/><rect x="1312.0" y="429.0" width="4" height="4"/><rect x="1328.2" y="431.5" width="4" height="4"/><rect x="1299.2" y="435.7" width="4" height="4"/><rect x="1316.1" y="436.7" width="4" height="4"/><rect x="1318.2" y="434.7" width="4" height="4"/><rect x="1320.1" y="437.2" width="4" height="4"/><rect x="1325.9" y="434.7" width="4" height="4"/><rect x="1325.9" y="438.6" width="4" height="4"/><rect x="1332.2" y="439.9" width="4" height="4"/><rect x="1330.3" y="444.0" width="4" height="4"/><rect x="1332.2" y="443.4" width="4" height="4"/><rect x="1268.2" y="446.7" width="4" height="4"/><rect x="1283.2" y="443.8" width="4" height="4"/><rect x="1301.1" y="452.8" width="4" height="4"/><rect x="1322.0" y="450.9" width="4" height="4"/><rect x="1337.0" y="446.8" width="4" height="4"/><rect x="1339.0" y="449.2" width="4" height="4"/><rect x="1340.9" y="447.2" width="4" height="4"/><rect x="1345.1" y="445.9" width="4" height="4"/><rect x="1335.1" y="451.8" width="4" height="4"/><rect x="1343.0" y="453.8" width="4" height="4"/><rect x="1349.2" y="449.0" width="4" height="4"/><rect x="1353.0" y="450.7" width="4" height="4"/><rect x="1355.1" y="455.5" width="4" height="4"/><rect x="1362.0" y="448.8" width="4" height="4"/><rect x="1366.1" y="445.1" width="4" height="4"/><rect x="1364.0" y="454.0" width="4" height="4"/><rect x="1364.0" y="458.2" width="4" height="4"/><rect x="1351.1" y="462.8" width="4" height="4"/><rect x="1359.2" y="464.9" width="4" height="4"/><rect x="1347.0" y="468.8" width="4" height="4"/><rect x="1357.0" y="469.5" width="4" height="4"/><rect x="1349.2" y="482.6" width="4" height="4"/><rect x="1368.0" y="472.0" width="4" height="4"/><rect x="1370.1" y="467.2" width="4" height="4"/><rect x="1372.0" y="466.8" width="4" height="4"/><rect x="1374.2" y="469.7" width="4" height="4"/><rect x="1376.1" y="466.1" width="4" height="4"/><rect x="1380.1" y="454.9" width="4" height="4"/><rect x="1382.0" y="454.2" width="4" height="4"/><rect x="1384.2" y="467.6" width="4" height="4"/><rect x="1386.1" y="468.0" width="4" height="4"/><rect x="1388.2" y="458.8" width="4" height="4"/><rect x="1391.1" y="461.8" width="4" height="4"/><rect x="1395.1" y="471.5" width="4" height="4"/><rect x="1397.0" y="462.8" width="4" height="4"/><rect x="1401.1" y="461.8" width="4" height="4"/><rect x="1403.0" y="449.3" width="4" height="4"/><rect x="1407.2" y="472.0" width="4" height="4"/><rect x="1411.3" y="473.0" width="4" height="4"/><rect x="1418.2" y="472.6" width="4" height="4"/><rect x="1432.2" y="476.8" width="4" height="4"/><rect x="1415.1" y="489.9" width="4" height="4"/><rect x="1424.2" y="510.7" width="4" height="4"/><rect x="1428.2" y="511.5" width="4" height="4"/><rect x="1438.0" y="508.0" width="4" height="4"/><rect x="1428.2" y="513.0" width="4" height="4"/><rect x="1445.1" y="526.5" width="4" height="4"/><rect x="1457.0" y="558.8" width="4" height="4"/><rect x="1451.1" y="564.9" width="4" height="4"/><rect x="1465.1" y="573.4" width="4" height="4"/><rect x="1476.1" y="560.7" width="4" height="4"/><rect x="1488.2" y="563.0" width="4" height="4"/><rect x="1509.2" y="562.4" width="4" height="4"/><rect x="1548.2" y="623.0" width="4" height="4"/><rect x="1260.1" y="590.5" width="4" height="4"/><rect x="1262.0" y="592.8" width="4" height="4"/><rect x="1264.0" y="599.0" width="4" height="4"/><rect x="1270.1" y="597.0" width="4" height="4"/><rect x="1258.2" y="605.3" width="4" height="4"/><rect x="1264.0" y="607.2" width="4" height="4"/><rect x="1268.2" y="607.2" width="4" height="4"/><rect x="1272.0" y="609.7" width="4" height="4"/><rect x="1276.1" y="603.0" width="4" height="4"/><rect x="1274.2" y="605.3" width="4" height="4"/><rect x="1279.0" y="615.9" width="4" height="4"/><rect x="1280.9" y="604.3" width="4" height="4"/><rect x="1283.2" y="617.4" width="4" height="4"/><rect x="1285.1" y="606.3" width="4" height="4"/><rect x="1289.0" y="619.3" width="4" height="4"/><rect x="1287.0" y="607.2" width="4" height="4"/><rect x="1290.9" y="610.1" width="4" height="4"/><rect x="1293.2" y="607.2" width="4" height="4"/><rect x="1295.1" y="605.9" width="4" height="4"/><rect x="1297.2" y="611.5" width="4" height="4"/><rect x="1299.2" y="616.8" width="4" height="4"/><rect x="1301.1" y="604.9" width="4" height="4"/><rect x="1303.0" y="606.7" width="4" height="4"/><rect x="1304.9" y="618.4" width="4" height="4"/><rect x="1308.2" y="619.7" width="4" height="4"/><rect x="1310.1" y="609.7" width="4" height="4"/><rect x="1312.0" y="616.8" width="4" height="4"/><rect x="1312.0" y="596.1" width="4" height="4"/><rect x="1314.2" y="613.0" width="4" height="4"/><rect x="1316.1" y="607.8" width="4" height="4"/><rect x="1318.2" y="614.0" width="4" height="4"/><rect x="1320.1" y="619.7" width="4" height="4"/><rect x="1322.0" y="618.4" width="4" height="4"/><rect x="1324.2" y="611.1" width="4" height="4"/><rect x="1325.9" y="605.3" width="4" height="4"/><rect x="1325.9" y="614.0" width="4" height="4"/><rect x="1328.2" y="620.7" width="4" height="4"/><rect x="1330.3" y="618.4" width="4" height="4"/><rect x="1332.2" y="606.7" width="4" height="4"/><rect x="1332.2" y="615.9" width="4" height="4"/><rect x="1335.1" y="617.8" width="4" height="4"/><rect x="1337.0" y="616.8" width="4" height="4"/><rect x="1339.0" y="618.4" width="4" height="4"/><rect x="1340.9" y="618.4" width="4" height="4"/><rect x="1343.0" y="616.8" width="4" height="4"/><rect x="1345.1" y="617.8" width="4" height="4"/><rect x="1349.2" y="619.3" width="4" height="4"/><rect x="1353.0" y="620.3" width="4" height="4"/><rect x="1357.0" y="621.1" width="4" height="4"/><rect x="1359.2" y="620.7" width="4" height="4"/><rect x="1362.0" y="608.8" width="4" height="4"/><rect x="1364.0" y="618.8" width="4" height="4"/><rect x="1366.1" y="617.8" width="4" height="4"/><rect x="1368.0" y="619.7" width="4" height="4"/><rect x="1376.1" y="618.8" width="4" height="4"/><rect x="1386.1" y="624.0" width="4" height="4"/><rect x="1407.2" y="628.0" width="4" height="4"/><rect x="1384.2" y="633.6" width="4" height="4"/><rect x="1355.1" y="637.6" width="4" height="4"/><rect x="1370.1" y="634.2" width="4" height="4"/><rect x="1372.0" y="637.6" width="4" height="4"/><rect x="1374.2" y="637.6" width="4" height="4"/><rect x="1380.1" y="637.6" width="4" height="4"/><rect x="1382.0" y="637.6" width="4" height="4"/><rect x="1388.2" y="637.6" width="4" height="4"/><rect x="1391.1" y="637.6" width="4" height="4"/><rect x="1395.1" y="635.7" width="4" height="4"/><rect x="1397.0" y="635.1" width="4" height="4"/><rect x="1401.1" y="637.6" width="4" height="4"/><rect x="1403.0" y="635.7" width="4" height="4"/><rect x="1411.3" y="633.8" width="4" height="4"/><rect x="1415.1" y="634.2" width="4" height="4"/><rect x="1418.2" y="635.1" width="4" height="4"/><rect x="1424.2" y="637.0" width="4" height="4"/><rect x="1428.2" y="637.6" width="4" height="4"/><rect x="1432.2" y="637.6" width="4" height="4"/><rect x="1438.0" y="637.6" width="4" height="4"/><rect x="1445.1" y="637.4" width="4" height="4"/><rect x="1451.1" y="637.0" width="4" height="4"/><rect x="1457.0" y="637.6" width="4" height="4"/><rect x="1465.1" y="637.6" width="4" height="4"/><rect x="1476.1" y="637.4" width="4" height="4"/><rect x="1488.2" y="637.4" width="4" height="4"/><rect x="1509.2" y="636.7" width="4" height="4"/><rect x="1548.2" y="637.6" width="4" height="4"/><rect x="1156.1" y="595.8" width="4" height="4"/><rect x="1162.1" y="597.5" width="4" height="4"/><rect x="1168.2" y="601.3" width="4" height="4"/><rect x="1175.2" y="598.4" width="4" height="4"/><rect x="1179.2" y="600.7" width="4" height="4"/><rect x="1183.1" y="604.3" width="4" height="4"/><rect x="1187.1" y="596.7" width="4" height="4"/><rect x="1191.1" y="597.7" width="4" height="4"/><rect x="1195.1" y="596.9" width="4" height="4"/><rect x="1197.1" y="601.8" width="4" height="4"/><rect x="1202.1" y="600.7" width="4" height="4"/><rect x="1206.1" y="601.1" width="4" height="4"/><rect x="1208.1" y="599.8" width="4" height="4"/><rect x="1212.1" y="602.1" width="4" height="4"/><rect x="1214.0" y="604.5" width="4" height="4"/><rect x="1216.1" y="603.2" width="4" height="4"/><rect x="1218.1" y="598.3" width="4" height="4"/><rect x="1220.0" y="600.1" width="4" height="4"/><rect x="1222.1" y="601.6" width="4" height="4"/><rect x="1224.1" y="608.6" width="4" height="4"/><rect x="1227.2" y="602.3" width="4" height="4"/><rect x="1229.1" y="603.9" width="4" height="4"/><rect x="1231.2" y="604.5" width="4" height="4"/><rect x="1233.1" y="608.4" width="4" height="4"/><rect x="1235.1" y="601.6" width="4" height="4"/><rect x="1237.2" y="615.7" width="4" height="4"/><rect x="1239.1" y="598.6" width="4" height="4"/><rect x="1241.1" y="599.8" width="4" height="4"/><rect x="1243.1" y="599.8" width="4" height="4"/><rect x="1245.1" y="601.6" width="4" height="4"/><rect x="1245.1" y="605.5" width="4" height="4"/><rect x="1247.0" y="595.2" width="4" height="4"/><rect x="1249.1" y="605.5" width="4" height="4"/><rect x="1251.0" y="599.8" width="4" height="4"/><rect x="1251.0" y="606.6" width="4" height="4"/><rect x="1255.0" y="604.5" width="4" height="4"/><rect x="1258.1" y="603.2" width="4" height="4"/><rect x="1258.1" y="607.2" width="4" height="4"/><rect x="1175.0" y="123.6" width="4" height="4"/><rect x="1177.0" y="123.6" width="4" height="4"/><rect x="1179.0" y="122.2" width="4" height="4"/><rect x="1183.0" y="122.2" width="4" height="4"/><rect x="1185.0" y="124.1" width="4" height="4"/><rect x="1187.0" y="124.1" width="4" height="4"/><rect x="1189.0" y="122.2" width="4" height="4"/><rect x="1191.0" y="123.6" width="4" height="4"/><rect x="1194.0" y="122.2" width="4" height="4"/><rect x="1196.0" y="122.2" width="4" height="4"/><rect x="1200.0" y="123.6" width="4" height="4"/><rect x="1202.0" y="124.1" width="4" height="4"/><rect x="1204.0" y="122.8" width="4" height="4"/><rect x="1208.0" y="122.2" width="4" height="4"/><rect x="1212.0" y="124.1" width="4" height="4"/><rect x="1215.0" y="122.2" width="4" height="4"/><rect x="1217.0" y="122.2" width="4" height="4"/><rect x="1221.0" y="122.8" width="4" height="4"/><rect x="1223.0" y="123.6" width="4" height="4"/><rect x="1225.0" y="124.1" width="4" height="4"/><rect x="1227.0" y="124.1" width="4" height="4"/><rect x="1229.0" y="124.1" width="4" height="4"/><rect x="1231.0" y="122.2" width="4" height="4"/><rect x="1235.0" y="124.1" width="4" height="4"/><rect x="1237.0" y="123.6" width="4" height="4"/><rect x="1239.0" y="124.1" width="4" height="4"/><rect x="1241.0" y="124.1" width="4" height="4"/><rect x="1243.0" y="124.1" width="4" height="4"/><rect x="1245.0" y="123.6" width="4" height="4"/><rect x="1249.0" y="123.6" width="4" height="4"/><rect x="1251.0" y="123.6" width="4" height="4"/><rect x="1255.0" y="123.6" width="4" height="4"/><rect x="1257.0" y="123.6" width="4" height="4"/><rect x="1259.0" y="122.8" width="4" height="4"/><rect x="1261.0" y="122.2" width="4" height="4"/><rect x="1265.0" y="123.6" width="4" height="4"/><rect x="1269.0" y="123.6" width="4" height="4"/><rect x="1271.0" y="124.6" width="4" height="4"/><rect x="1274.0" y="123.6" width="4" height="4"/><rect x="1278.0" y="122.2" width="4" height="4"/><rect x="1280.0" y="124.1" width="4" height="4"/><rect x="1283.0" y="122.8" width="4" height="4"/><rect x="1285.0" y="122.8" width="4" height="4"/><rect x="1288.0" y="123.6" width="4" height="4"/><rect x="1290.0" y="124.6" width="4" height="4"/><rect x="1292.0" y="124.1" width="4" height="4"/><rect x="1296.0" y="123.6" width="4" height="4"/><rect x="1298.0" y="124.6" width="4" height="4"/><rect x="1300.0" y="124.1" width="4" height="4"/><rect x="1303.0" y="124.1" width="4" height="4"/><rect x="1306.0" y="122.2" width="4" height="4"/><rect x="1308.0" y="123.6" width="4" height="4"/><rect x="1311.0" y="124.6" width="4" height="4"/><rect x="1313.0" y="122.2" width="4" height="4"/><rect x="1315.0" y="124.6" width="4" height="4"/><rect x="1319.0" y="124.6" width="4" height="4"/><rect x="1322.0" y="123.6" width="4" height="4"/><rect x="1197.1" y="127.3" width="4" height="4"/><rect x="1224.1" y="126.8" width="4" height="4"/><rect x="1247.1" y="126.8" width="4" height="4"/><rect x="1254.1" y="131.4" width="4" height="4"/></g><circle cx="796.7" cy="687" r="6" fill="#4048cc"/><path d="M919.5 680.8 l6.2 6.2 l-6.2 6.2 l-6.2 -6.2z" fill="#078007"/><rect x="1037.7" y="681" width="11.6" height="12" fill="#ff0a50"/><text x="810.5" y="691.6" font-size="12.5" font-weight="bold" fill="#333" textLength="78.2" lengthAdjust="spacingAndGlyphs">InjectionTime</text><text x="932.6" y="691.6" font-size="12.5" font-weight="bold" fill="#333" textLength="80" lengthAdjust="spacingAndGlyphs">CycID_CycCnt</text><text x="1056" y="691.6" font-size="12.5" font-weight="bold" fill="#333" textLength="77.8" lengthAdjust="spacingAndGlyphs">Cycle_CycCnt</text><text transform="translate(362.3 411.4) rotate(-90)" text-anchor="middle" font-size="12" fill="#7a7a7a" textLength="149" lengthAdjust="spacing">Drag to resize / Click to hide</text><g fill="none" stroke="#8a8a8a" stroke-width="1.1" stroke-linecap="round" stroke-linejoin="round"><path d="M356.6 322.5 H364.4 M361.4 319.5 L364.4 322.5 L361.4 325.5"/><path d="M362.6 500 H354.4 M357.4 497 L354.4 500 L357.4 503"/></g></svg>
</body></html>
